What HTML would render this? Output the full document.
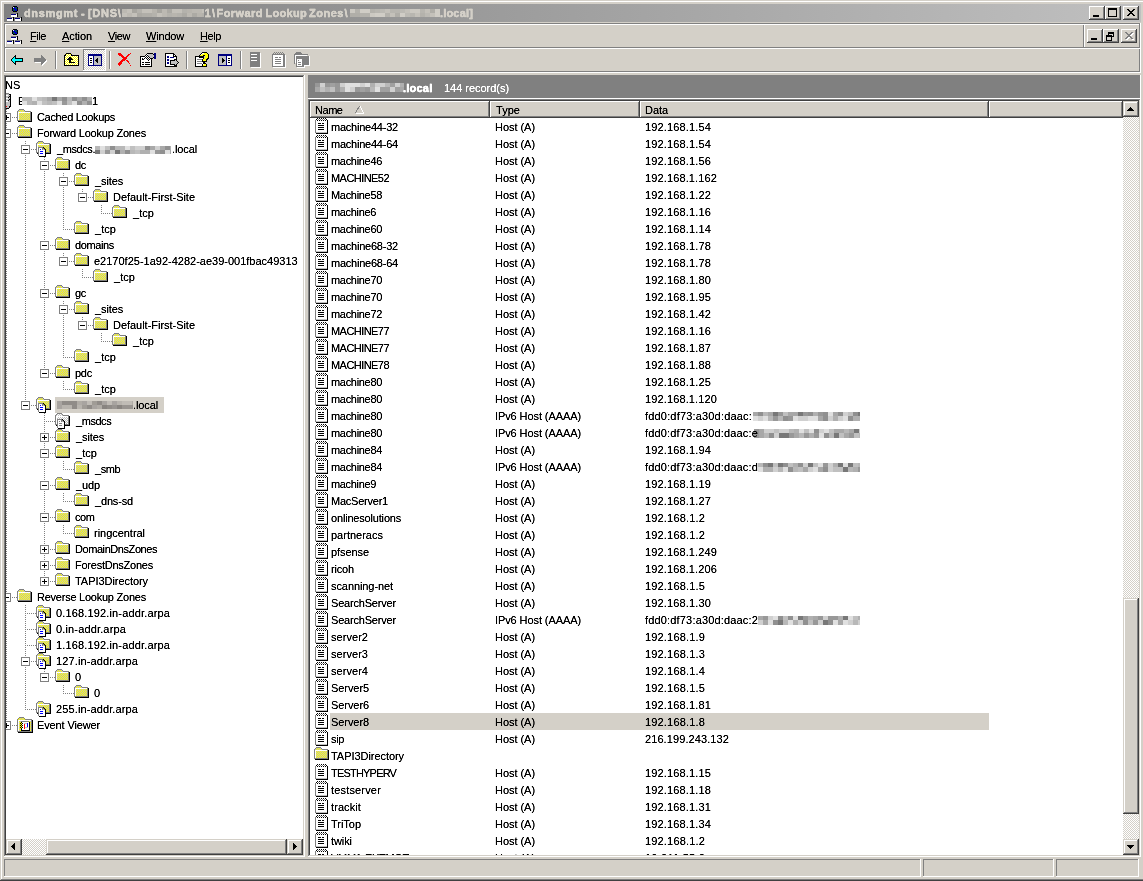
<!DOCTYPE html><html><head><meta charset="utf-8"><title>dnsmgmt</title><style>html,body{margin:0;padding:0}
body{width:1143px;height:881px;overflow:hidden;background:#d4d0c8;position:relative;font:11px/13px "Liberation Sans",sans-serif;color:#000}
div,span.t,svg.i{position:absolute}
span.t{white-space:pre}
svg.i{shape-rendering:crispEdges;overflow:hidden}
.tl{filter:url(#tf)}
u{text-decoration:underline;text-underline-offset:1px}
#clipL{left:6px;top:77px;width:297px;height:762px;overflow:hidden}
#clipR{left:310px;top:118px;width:813px;height:737px;overflow:hidden}
</style></head><body><svg width="0" height="0" style="position:absolute"><defs>
<filter id="tf" x="0" y="0" width="100%" height="100%" color-interpolation-filters="sRGB"><feComponentTransfer><feFuncA type="linear" slope="1.45" intercept="-0.03"/></feComponentTransfer></filter>
<pattern id="dyw" width="2" height="2" patternUnits="userSpaceOnUse"><rect width="2" height="2" fill="#fff"/><rect width="1" height="1" fill="#ff0"/><rect x="1" y="1" width="1" height="1" fill="#ff0"/></pattern>
<pattern id="dfw" width="2" height="2" patternUnits="userSpaceOnUse"><rect width="2" height="2" fill="#d4d0c8"/><rect width="1" height="1" fill="#fff"/><rect x="1" y="1" width="1" height="1" fill="#fff"/></pattern>
<pattern id="dgf" width="2" height="2" patternUnits="userSpaceOnUse"><rect width="2" height="2" fill="#d4d0c8"/><rect width="1" height="1" fill="#808080"/><rect x="1" y="1" width="1" height="1" fill="#808080"/></pattern>
</defs></svg><svg width="0" height="0" style="position:absolute"><defs><symbol id="fo" viewBox="0 0 16 16"><rect x="2" y="0" width="5" height="1" fill="#808080"/><rect x="1" y="1" width="1" height="1" fill="#808080"/><rect x="2" y="1" width="1" height="1" fill="#c0c0c0"/><rect x="3" y="1" width="1" height="1" fill="#ffff00"/><rect x="4" y="1" width="1" height="1" fill="#c0c0c0"/><rect x="5" y="1" width="1" height="1" fill="#ffff00"/><rect x="6" y="1" width="1" height="1" fill="#c0c0c0"/><rect x="7" y="1" width="1" height="1" fill="#808080"/><rect x="0" y="2" width="1" height="1" fill="#808080"/><rect x="1" y="2" width="1" height="1" fill="#c0c0c0"/><rect x="2" y="2" width="1" height="1" fill="#ffff00"/><rect x="3" y="2" width="1" height="1" fill="#c0c0c0"/><rect x="4" y="2" width="1" height="1" fill="#ffff00"/><rect x="5" y="2" width="1" height="1" fill="#c0c0c0"/><rect x="6" y="2" width="1" height="1" fill="#ffff00"/><rect x="7" y="2" width="1" height="1" fill="#c0c0c0"/><rect x="8" y="2" width="6" height="1" fill="#808080"/><rect x="0" y="3" width="1" height="1" fill="#808080"/><rect x="1" y="3" width="12" height="1" fill="#ffffff"/><rect x="13" y="3" width="1" height="1" fill="#808080"/><rect x="14" y="3" width="1" height="1" fill="#000000"/><rect x="0" y="4" width="1" height="1" fill="#808080"/><rect x="1" y="4" width="1" height="1" fill="#ffffff"/><rect x="2" y="4" width="1" height="1" fill="#ffff00"/><rect x="3" y="4" width="1" height="1" fill="#c0c0c0"/><rect x="4" y="4" width="1" height="1" fill="#ffff00"/><rect x="5" y="4" width="1" height="1" fill="#c0c0c0"/><rect x="6" y="4" width="1" height="1" fill="#ffff00"/><rect x="7" y="4" width="1" height="1" fill="#c0c0c0"/><rect x="8" y="4" width="1" height="1" fill="#ffff00"/><rect x="9" y="4" width="1" height="1" fill="#c0c0c0"/><rect x="10" y="4" width="1" height="1" fill="#ffff00"/><rect x="11" y="4" width="1" height="1" fill="#c0c0c0"/><rect x="12" y="4" width="1" height="1" fill="#ffff00"/><rect x="13" y="4" width="1" height="1" fill="#808080"/><rect x="14" y="4" width="1" height="1" fill="#000000"/><rect x="0" y="5" width="1" height="1" fill="#808080"/><rect x="1" y="5" width="1" height="1" fill="#ffffff"/><rect x="2" y="5" width="1" height="1" fill="#c0c0c0"/><rect x="3" y="5" width="1" height="1" fill="#ffff00"/><rect x="4" y="5" width="1" height="1" fill="#c0c0c0"/><rect x="5" y="5" width="1" height="1" fill="#ffff00"/><rect x="6" y="5" width="1" height="1" fill="#c0c0c0"/><rect x="7" y="5" width="1" height="1" fill="#ffff00"/><rect x="8" y="5" width="1" height="1" fill="#c0c0c0"/><rect x="9" y="5" width="1" height="1" fill="#ffff00"/><rect x="10" y="5" width="1" height="1" fill="#c0c0c0"/><rect x="11" y="5" width="1" height="1" fill="#ffff00"/><rect x="12" y="5" width="1" height="1" fill="#c0c0c0"/><rect x="13" y="5" width="1" height="1" fill="#808080"/><rect x="14" y="5" width="1" height="1" fill="#000000"/><rect x="0" y="6" width="1" height="1" fill="#808080"/><rect x="1" y="6" width="1" height="1" fill="#ffffff"/><rect x="2" y="6" width="1" height="1" fill="#ffff00"/><rect x="3" y="6" width="1" height="1" fill="#c0c0c0"/><rect x="4" y="6" width="1" height="1" fill="#ffff00"/><rect x="5" y="6" width="1" height="1" fill="#c0c0c0"/><rect x="6" y="6" width="1" height="1" fill="#ffff00"/><rect x="7" y="6" width="1" height="1" fill="#c0c0c0"/><rect x="8" y="6" width="1" height="1" fill="#ffff00"/><rect x="9" y="6" width="1" height="1" fill="#c0c0c0"/><rect x="10" y="6" width="1" height="1" fill="#ffff00"/><rect x="11" y="6" width="1" height="1" fill="#c0c0c0"/><rect x="12" y="6" width="1" height="1" fill="#ffff00"/><rect x="13" y="6" width="1" height="1" fill="#808080"/><rect x="14" y="6" width="1" height="1" fill="#000000"/><rect x="0" y="7" width="1" height="1" fill="#808080"/><rect x="1" y="7" width="1" height="1" fill="#ffffff"/><rect x="2" y="7" width="1" height="1" fill="#c0c0c0"/><rect x="3" y="7" width="1" height="1" fill="#ffff00"/><rect x="4" y="7" width="1" height="1" fill="#c0c0c0"/><rect x="5" y="7" width="1" height="1" fill="#ffff00"/><rect x="6" y="7" width="1" height="1" fill="#c0c0c0"/><rect x="7" y="7" width="1" height="1" fill="#ffff00"/><rect x="8" y="7" width="1" height="1" fill="#c0c0c0"/><rect x="9" y="7" width="1" height="1" fill="#ffff00"/><rect x="10" y="7" width="1" height="1" fill="#c0c0c0"/><rect x="11" y="7" width="1" height="1" fill="#ffff00"/><rect x="12" y="7" width="1" height="1" fill="#c0c0c0"/><rect x="13" y="7" width="1" height="1" fill="#808080"/><rect x="14" y="7" width="1" height="1" fill="#000000"/><rect x="0" y="8" width="1" height="1" fill="#808080"/><rect x="1" y="8" width="1" height="1" fill="#ffffff"/><rect x="2" y="8" width="1" height="1" fill="#ffff00"/><rect x="3" y="8" width="1" height="1" fill="#c0c0c0"/><rect x="4" y="8" width="1" height="1" fill="#ffff00"/><rect x="5" y="8" width="1" height="1" fill="#c0c0c0"/><rect x="6" y="8" width="1" height="1" fill="#ffff00"/><rect x="7" y="8" width="1" height="1" fill="#c0c0c0"/><rect x="8" y="8" width="1" height="1" fill="#ffff00"/><rect x="9" y="8" width="1" height="1" fill="#c0c0c0"/><rect x="10" y="8" width="1" height="1" fill="#ffff00"/><rect x="11" y="8" width="1" height="1" fill="#c0c0c0"/><rect x="12" y="8" width="1" height="1" fill="#ffff00"/><rect x="13" y="8" width="1" height="1" fill="#808080"/><rect x="14" y="8" width="1" height="1" fill="#000000"/><rect x="0" y="9" width="1" height="1" fill="#808080"/><rect x="1" y="9" width="1" height="1" fill="#ffffff"/><rect x="2" y="9" width="1" height="1" fill="#c0c0c0"/><rect x="3" y="9" width="1" height="1" fill="#ffff00"/><rect x="4" y="9" width="1" height="1" fill="#c0c0c0"/><rect x="5" y="9" width="1" height="1" fill="#ffff00"/><rect x="6" y="9" width="1" height="1" fill="#c0c0c0"/><rect x="7" y="9" width="1" height="1" fill="#ffff00"/><rect x="8" y="9" width="1" height="1" fill="#c0c0c0"/><rect x="9" y="9" width="1" height="1" fill="#ffff00"/><rect x="10" y="9" width="1" height="1" fill="#c0c0c0"/><rect x="11" y="9" width="1" height="1" fill="#ffff00"/><rect x="12" y="9" width="1" height="1" fill="#c0c0c0"/><rect x="13" y="9" width="1" height="1" fill="#808080"/><rect x="14" y="9" width="1" height="1" fill="#000000"/><rect x="0" y="10" width="1" height="1" fill="#808080"/><rect x="1" y="10" width="1" height="1" fill="#ffffff"/><rect x="2" y="10" width="1" height="1" fill="#ffff00"/><rect x="3" y="10" width="1" height="1" fill="#c0c0c0"/><rect x="4" y="10" width="1" height="1" fill="#ffff00"/><rect x="5" y="10" width="1" height="1" fill="#c0c0c0"/><rect x="6" y="10" width="1" height="1" fill="#ffff00"/><rect x="7" y="10" width="1" height="1" fill="#c0c0c0"/><rect x="8" y="10" width="1" height="1" fill="#ffff00"/><rect x="9" y="10" width="1" height="1" fill="#c0c0c0"/><rect x="10" y="10" width="1" height="1" fill="#ffff00"/><rect x="11" y="10" width="1" height="1" fill="#c0c0c0"/><rect x="12" y="10" width="1" height="1" fill="#ffff00"/><rect x="13" y="10" width="1" height="1" fill="#808080"/><rect x="14" y="10" width="1" height="1" fill="#000000"/><rect x="0" y="11" width="14" height="1" fill="#808080"/><rect x="14" y="11" width="1" height="1" fill="#000000"/><rect x="1" y="12" width="14" height="1" fill="#000000"/></symbol><symbol id="zo" viewBox="0 0 16 16"><rect x="2" y="0" width="5" height="1" fill="#808080"/><rect x="1" y="1" width="1" height="1" fill="#808080"/><rect x="2" y="1" width="1" height="1" fill="#c0c0c0"/><rect x="3" y="1" width="1" height="1" fill="#ffff00"/><rect x="4" y="1" width="1" height="1" fill="#c0c0c0"/><rect x="5" y="1" width="1" height="1" fill="#ffff00"/><rect x="6" y="1" width="1" height="1" fill="#c0c0c0"/><rect x="7" y="1" width="1" height="1" fill="#808080"/><rect x="0" y="2" width="1" height="1" fill="#808080"/><rect x="1" y="2" width="1" height="1" fill="#c0c0c0"/><rect x="2" y="2" width="1" height="1" fill="#ffff00"/><rect x="3" y="2" width="1" height="1" fill="#c0c0c0"/><rect x="4" y="2" width="1" height="1" fill="#ffff00"/><rect x="5" y="2" width="1" height="1" fill="#c0c0c0"/><rect x="6" y="2" width="1" height="1" fill="#ffff00"/><rect x="7" y="2" width="1" height="1" fill="#c0c0c0"/><rect x="8" y="2" width="6" height="1" fill="#808080"/><rect x="0" y="3" width="1" height="1" fill="#808080"/><rect x="1" y="3" width="12" height="1" fill="#ffffff"/><rect x="13" y="3" width="1" height="1" fill="#808080"/><rect x="14" y="3" width="1" height="1" fill="#000000"/><rect x="0" y="4" width="1" height="1" fill="#808080"/><rect x="1" y="4" width="1" height="1" fill="#ffffff"/><rect x="2" y="4" width="1" height="1" fill="#ffff00"/><rect x="3" y="4" width="1" height="1" fill="#c0c0c0"/><rect x="4" y="4" width="1" height="1" fill="#ffff00"/><rect x="5" y="4" width="1" height="1" fill="#c0c0c0"/><rect x="6" y="4" width="1" height="1" fill="#ffff00"/><rect x="7" y="4" width="1" height="1" fill="#c0c0c0"/><rect x="8" y="4" width="1" height="1" fill="#ffff00"/><rect x="9" y="4" width="1" height="1" fill="#c0c0c0"/><rect x="10" y="4" width="1" height="1" fill="#ffff00"/><rect x="11" y="4" width="1" height="1" fill="#c0c0c0"/><rect x="12" y="4" width="1" height="1" fill="#ffff00"/><rect x="13" y="4" width="1" height="1" fill="#808080"/><rect x="14" y="4" width="1" height="1" fill="#000000"/><rect x="0" y="5" width="1" height="1" fill="#808080"/><rect x="1" y="5" width="1" height="1" fill="#ffffff"/><rect x="2" y="5" width="1" height="1" fill="#c0c0c0"/><rect x="3" y="5" width="1" height="1" fill="#ffff00"/><rect x="4" y="5" width="1" height="1" fill="#c0c0c0"/><rect x="5" y="5" width="1" height="1" fill="#ffff00"/><rect x="6" y="5" width="1" height="1" fill="#c0c0c0"/><rect x="7" y="5" width="1" height="1" fill="#ffff00"/><rect x="8" y="5" width="1" height="1" fill="#c0c0c0"/><rect x="9" y="5" width="1" height="1" fill="#ffff00"/><rect x="10" y="5" width="1" height="1" fill="#c0c0c0"/><rect x="11" y="5" width="1" height="1" fill="#ffff00"/><rect x="12" y="5" width="1" height="1" fill="#c0c0c0"/><rect x="13" y="5" width="1" height="1" fill="#808080"/><rect x="14" y="5" width="1" height="1" fill="#000000"/><rect x="0" y="6" width="1" height="1" fill="#808080"/><rect x="1" y="6" width="1" height="1" fill="#ffffff"/><rect x="2" y="6" width="1" height="1" fill="#ffff00"/><rect x="3" y="6" width="1" height="1" fill="#c0c0c0"/><rect x="4" y="6" width="1" height="1" fill="#ffff00"/><rect x="5" y="6" width="1" height="1" fill="#c0c0c0"/><rect x="6" y="6" width="1" height="1" fill="#ffff00"/><rect x="7" y="6" width="1" height="1" fill="#c0c0c0"/><rect x="8" y="6" width="1" height="1" fill="#ffff00"/><rect x="9" y="6" width="1" height="1" fill="#c0c0c0"/><rect x="10" y="6" width="1" height="1" fill="#ffff00"/><rect x="11" y="6" width="1" height="1" fill="#c0c0c0"/><rect x="12" y="6" width="1" height="1" fill="#ffff00"/><rect x="13" y="6" width="1" height="1" fill="#808080"/><rect x="14" y="6" width="1" height="1" fill="#000000"/><rect x="0" y="7" width="1" height="1" fill="#808080"/><rect x="1" y="7" width="1" height="1" fill="#ffffff"/><rect x="2" y="7" width="1" height="1" fill="#c0c0c0"/><rect x="3" y="7" width="1" height="1" fill="#ffff00"/><rect x="4" y="7" width="1" height="1" fill="#c0c0c0"/><rect x="5" y="7" width="1" height="1" fill="#ffff00"/><rect x="6" y="7" width="1" height="1" fill="#c0c0c0"/><rect x="7" y="7" width="1" height="1" fill="#ffff00"/><rect x="8" y="7" width="1" height="1" fill="#c0c0c0"/><rect x="9" y="7" width="1" height="1" fill="#ffff00"/><rect x="10" y="7" width="1" height="1" fill="#c0c0c0"/><rect x="11" y="7" width="1" height="1" fill="#ffff00"/><rect x="12" y="7" width="1" height="1" fill="#c0c0c0"/><rect x="13" y="7" width="1" height="1" fill="#808080"/><rect x="14" y="7" width="1" height="1" fill="#000000"/><rect x="0" y="8" width="1" height="1" fill="#808080"/><rect x="1" y="8" width="1" height="1" fill="#ffffff"/><rect x="2" y="8" width="1" height="1" fill="#ffff00"/><rect x="3" y="8" width="1" height="1" fill="#c0c0c0"/><rect x="4" y="8" width="1" height="1" fill="#ffff00"/><rect x="5" y="8" width="1" height="1" fill="#c0c0c0"/><rect x="6" y="8" width="1" height="1" fill="#ffff00"/><rect x="7" y="8" width="1" height="1" fill="#c0c0c0"/><rect x="8" y="8" width="1" height="1" fill="#ffff00"/><rect x="9" y="8" width="1" height="1" fill="#c0c0c0"/><rect x="10" y="8" width="1" height="1" fill="#ffff00"/><rect x="11" y="8" width="1" height="1" fill="#c0c0c0"/><rect x="12" y="8" width="1" height="1" fill="#ffff00"/><rect x="13" y="8" width="1" height="1" fill="#808080"/><rect x="14" y="8" width="1" height="1" fill="#000000"/><rect x="0" y="9" width="1" height="1" fill="#808080"/><rect x="1" y="9" width="1" height="1" fill="#ffffff"/><rect x="2" y="9" width="1" height="1" fill="#c0c0c0"/><rect x="3" y="9" width="1" height="1" fill="#ffff00"/><rect x="4" y="9" width="1" height="1" fill="#c0c0c0"/><rect x="5" y="9" width="1" height="1" fill="#ffff00"/><rect x="6" y="9" width="1" height="1" fill="#c0c0c0"/><rect x="7" y="9" width="1" height="1" fill="#ffff00"/><rect x="8" y="9" width="1" height="1" fill="#c0c0c0"/><rect x="9" y="9" width="1" height="1" fill="#ffff00"/><rect x="10" y="9" width="1" height="1" fill="#c0c0c0"/><rect x="11" y="9" width="1" height="1" fill="#ffff00"/><rect x="12" y="9" width="1" height="1" fill="#c0c0c0"/><rect x="13" y="9" width="1" height="1" fill="#808080"/><rect x="14" y="9" width="1" height="1" fill="#000000"/><rect x="0" y="10" width="1" height="1" fill="#808080"/><rect x="1" y="10" width="1" height="1" fill="#ffffff"/><rect x="2" y="10" width="1" height="1" fill="#ffff00"/><rect x="3" y="10" width="1" height="1" fill="#c0c0c0"/><rect x="4" y="10" width="1" height="1" fill="#ffff00"/><rect x="5" y="10" width="1" height="1" fill="#c0c0c0"/><rect x="6" y="10" width="1" height="1" fill="#ffff00"/><rect x="7" y="10" width="1" height="1" fill="#c0c0c0"/><rect x="8" y="10" width="1" height="1" fill="#ffff00"/><rect x="9" y="10" width="1" height="1" fill="#c0c0c0"/><rect x="10" y="10" width="1" height="1" fill="#ffff00"/><rect x="11" y="10" width="1" height="1" fill="#c0c0c0"/><rect x="12" y="10" width="1" height="1" fill="#ffff00"/><rect x="13" y="10" width="1" height="1" fill="#808080"/><rect x="14" y="10" width="1" height="1" fill="#000000"/><rect x="0" y="11" width="14" height="1" fill="#808080"/><rect x="14" y="11" width="1" height="1" fill="#000000"/><rect x="1" y="12" width="14" height="1" fill="#000000"/><rect x="1" y="12" width="1" height="1" fill="#000"/><rect x="2" y="6" width="5" height="1" fill="#808080"/><rect x="7" y="6" width="1" height="1" fill="#000000"/><rect x="2" y="7" width="1" height="1" fill="#808080"/><rect x="3" y="7" width="3" height="1" fill="#ffffff"/><rect x="6" y="7" width="2" height="1" fill="#808080"/><rect x="8" y="7" width="1" height="1" fill="#000000"/><rect x="2" y="8" width="1" height="1" fill="#808080"/><rect x="3" y="8" width="1" height="1" fill="#ffffff"/><rect x="4" y="8" width="1" height="1" fill="#0000ff"/><rect x="5" y="8" width="1" height="1" fill="#ffffff"/><rect x="6" y="8" width="1" height="1" fill="#808080"/><rect x="7" y="8" width="1" height="1" fill="#c0c0c0"/><rect x="8" y="8" width="1" height="1" fill="#808080"/><rect x="9" y="8" width="1" height="1" fill="#000000"/><rect x="2" y="9" width="1" height="1" fill="#808080"/><rect x="3" y="9" width="6" height="1" fill="#ffffff"/><rect x="9" y="9" width="1" height="1" fill="#000000"/><rect x="2" y="10" width="1" height="1" fill="#808080"/><rect x="3" y="10" width="1" height="1" fill="#ffffff"/><rect x="4" y="10" width="3" height="1" fill="#0000ff"/><rect x="7" y="10" width="2" height="1" fill="#ffffff"/><rect x="9" y="10" width="1" height="1" fill="#000000"/><rect x="2" y="11" width="1" height="1" fill="#808080"/><rect x="3" y="11" width="6" height="1" fill="#ffffff"/><rect x="9" y="11" width="1" height="1" fill="#000000"/><rect x="2" y="12" width="1" height="1" fill="#808080"/><rect x="3" y="12" width="1" height="1" fill="#ffffff"/><rect x="4" y="12" width="3" height="1" fill="#0000ff"/><rect x="7" y="12" width="2" height="1" fill="#ffffff"/><rect x="9" y="12" width="1" height="1" fill="#000000"/><rect x="2" y="13" width="1" height="1" fill="#808080"/><rect x="3" y="13" width="6" height="1" fill="#ffffff"/><rect x="9" y="13" width="1" height="1" fill="#000000"/><rect x="2" y="14" width="1" height="1" fill="#808080"/><rect x="3" y="14" width="6" height="1" fill="#ffffff"/><rect x="9" y="14" width="1" height="1" fill="#000000"/><rect x="3" y="15" width="7" height="1" fill="#000000"/></symbol><symbol id="de" viewBox="0 0 16 16"><rect x="2" y="0" width="5" height="1" fill="#808080"/><rect x="1" y="1" width="1" height="1" fill="#808080"/><rect x="2" y="1" width="1" height="1" fill="#c0c0c0"/><rect x="3" y="1" width="1" height="1" fill="#ffffff"/><rect x="4" y="1" width="1" height="1" fill="#c0c0c0"/><rect x="5" y="1" width="1" height="1" fill="#ffffff"/><rect x="6" y="1" width="1" height="1" fill="#c0c0c0"/><rect x="7" y="1" width="1" height="1" fill="#808080"/><rect x="0" y="2" width="1" height="1" fill="#808080"/><rect x="1" y="2" width="1" height="1" fill="#c0c0c0"/><rect x="2" y="2" width="1" height="1" fill="#ffffff"/><rect x="3" y="2" width="1" height="1" fill="#c0c0c0"/><rect x="4" y="2" width="1" height="1" fill="#ffffff"/><rect x="5" y="2" width="1" height="1" fill="#c0c0c0"/><rect x="6" y="2" width="1" height="1" fill="#ffffff"/><rect x="7" y="2" width="1" height="1" fill="#c0c0c0"/><rect x="8" y="2" width="6" height="1" fill="#808080"/><rect x="0" y="3" width="1" height="1" fill="#808080"/><rect x="1" y="3" width="12" height="1" fill="#ffffff"/><rect x="13" y="3" width="1" height="1" fill="#808080"/><rect x="14" y="3" width="1" height="1" fill="#000000"/><rect x="0" y="4" width="1" height="1" fill="#808080"/><rect x="1" y="4" width="1" height="1" fill="#ffffff"/><rect x="2" y="4" width="1" height="1" fill="#ffffff"/><rect x="3" y="4" width="1" height="1" fill="#c0c0c0"/><rect x="4" y="4" width="1" height="1" fill="#ffffff"/><rect x="5" y="4" width="1" height="1" fill="#c0c0c0"/><rect x="6" y="4" width="1" height="1" fill="#ffffff"/><rect x="7" y="4" width="1" height="1" fill="#c0c0c0"/><rect x="8" y="4" width="1" height="1" fill="#ffffff"/><rect x="9" y="4" width="1" height="1" fill="#c0c0c0"/><rect x="10" y="4" width="1" height="1" fill="#ffffff"/><rect x="11" y="4" width="1" height="1" fill="#c0c0c0"/><rect x="12" y="4" width="1" height="1" fill="#ffffff"/><rect x="13" y="4" width="1" height="1" fill="#808080"/><rect x="14" y="4" width="1" height="1" fill="#000000"/><rect x="0" y="5" width="1" height="1" fill="#808080"/><rect x="1" y="5" width="1" height="1" fill="#ffffff"/><rect x="2" y="5" width="1" height="1" fill="#c0c0c0"/><rect x="3" y="5" width="1" height="1" fill="#ffffff"/><rect x="4" y="5" width="1" height="1" fill="#c0c0c0"/><rect x="5" y="5" width="1" height="1" fill="#ffffff"/><rect x="6" y="5" width="1" height="1" fill="#c0c0c0"/><rect x="7" y="5" width="1" height="1" fill="#ffffff"/><rect x="8" y="5" width="1" height="1" fill="#c0c0c0"/><rect x="9" y="5" width="1" height="1" fill="#ffffff"/><rect x="10" y="5" width="1" height="1" fill="#c0c0c0"/><rect x="11" y="5" width="1" height="1" fill="#ffffff"/><rect x="12" y="5" width="1" height="1" fill="#c0c0c0"/><rect x="13" y="5" width="1" height="1" fill="#808080"/><rect x="14" y="5" width="1" height="1" fill="#000000"/><rect x="0" y="6" width="1" height="1" fill="#808080"/><rect x="1" y="6" width="1" height="1" fill="#ffffff"/><rect x="2" y="6" width="1" height="1" fill="#ffffff"/><rect x="3" y="6" width="1" height="1" fill="#c0c0c0"/><rect x="4" y="6" width="1" height="1" fill="#ffffff"/><rect x="5" y="6" width="1" height="1" fill="#c0c0c0"/><rect x="6" y="6" width="1" height="1" fill="#ffffff"/><rect x="7" y="6" width="1" height="1" fill="#c0c0c0"/><rect x="8" y="6" width="1" height="1" fill="#ffffff"/><rect x="9" y="6" width="1" height="1" fill="#c0c0c0"/><rect x="10" y="6" width="1" height="1" fill="#ffffff"/><rect x="11" y="6" width="1" height="1" fill="#c0c0c0"/><rect x="12" y="6" width="1" height="1" fill="#ffffff"/><rect x="13" y="6" width="1" height="1" fill="#808080"/><rect x="14" y="6" width="1" height="1" fill="#000000"/><rect x="0" y="7" width="1" height="1" fill="#808080"/><rect x="1" y="7" width="1" height="1" fill="#ffffff"/><rect x="2" y="7" width="1" height="1" fill="#c0c0c0"/><rect x="3" y="7" width="1" height="1" fill="#ffffff"/><rect x="4" y="7" width="1" height="1" fill="#c0c0c0"/><rect x="5" y="7" width="1" height="1" fill="#ffffff"/><rect x="6" y="7" width="1" height="1" fill="#c0c0c0"/><rect x="7" y="7" width="1" height="1" fill="#ffffff"/><rect x="8" y="7" width="1" height="1" fill="#c0c0c0"/><rect x="9" y="7" width="1" height="1" fill="#ffffff"/><rect x="10" y="7" width="1" height="1" fill="#c0c0c0"/><rect x="11" y="7" width="1" height="1" fill="#ffffff"/><rect x="12" y="7" width="1" height="1" fill="#c0c0c0"/><rect x="13" y="7" width="1" height="1" fill="#808080"/><rect x="14" y="7" width="1" height="1" fill="#000000"/><rect x="0" y="8" width="1" height="1" fill="#808080"/><rect x="1" y="8" width="1" height="1" fill="#ffffff"/><rect x="2" y="8" width="1" height="1" fill="#ffffff"/><rect x="3" y="8" width="1" height="1" fill="#c0c0c0"/><rect x="4" y="8" width="1" height="1" fill="#ffffff"/><rect x="5" y="8" width="1" height="1" fill="#c0c0c0"/><rect x="6" y="8" width="1" height="1" fill="#ffffff"/><rect x="7" y="8" width="1" height="1" fill="#c0c0c0"/><rect x="8" y="8" width="1" height="1" fill="#ffffff"/><rect x="9" y="8" width="1" height="1" fill="#c0c0c0"/><rect x="10" y="8" width="1" height="1" fill="#ffffff"/><rect x="11" y="8" width="1" height="1" fill="#c0c0c0"/><rect x="12" y="8" width="1" height="1" fill="#ffffff"/><rect x="13" y="8" width="1" height="1" fill="#808080"/><rect x="14" y="8" width="1" height="1" fill="#000000"/><rect x="0" y="9" width="1" height="1" fill="#808080"/><rect x="1" y="9" width="1" height="1" fill="#ffffff"/><rect x="2" y="9" width="1" height="1" fill="#c0c0c0"/><rect x="3" y="9" width="1" height="1" fill="#ffffff"/><rect x="4" y="9" width="1" height="1" fill="#c0c0c0"/><rect x="5" y="9" width="1" height="1" fill="#ffffff"/><rect x="6" y="9" width="1" height="1" fill="#c0c0c0"/><rect x="7" y="9" width="1" height="1" fill="#ffffff"/><rect x="8" y="9" width="1" height="1" fill="#c0c0c0"/><rect x="9" y="9" width="1" height="1" fill="#ffffff"/><rect x="10" y="9" width="1" height="1" fill="#c0c0c0"/><rect x="11" y="9" width="1" height="1" fill="#ffffff"/><rect x="12" y="9" width="1" height="1" fill="#c0c0c0"/><rect x="13" y="9" width="1" height="1" fill="#808080"/><rect x="14" y="9" width="1" height="1" fill="#000000"/><rect x="0" y="10" width="1" height="1" fill="#808080"/><rect x="1" y="10" width="1" height="1" fill="#ffffff"/><rect x="2" y="10" width="1" height="1" fill="#ffffff"/><rect x="3" y="10" width="1" height="1" fill="#c0c0c0"/><rect x="4" y="10" width="1" height="1" fill="#ffffff"/><rect x="5" y="10" width="1" height="1" fill="#c0c0c0"/><rect x="6" y="10" width="1" height="1" fill="#ffffff"/><rect x="7" y="10" width="1" height="1" fill="#c0c0c0"/><rect x="8" y="10" width="1" height="1" fill="#ffffff"/><rect x="9" y="10" width="1" height="1" fill="#c0c0c0"/><rect x="10" y="10" width="1" height="1" fill="#ffffff"/><rect x="11" y="10" width="1" height="1" fill="#c0c0c0"/><rect x="12" y="10" width="1" height="1" fill="#ffffff"/><rect x="13" y="10" width="1" height="1" fill="#808080"/><rect x="14" y="10" width="1" height="1" fill="#000000"/><rect x="0" y="11" width="14" height="1" fill="#808080"/><rect x="14" y="11" width="1" height="1" fill="#000000"/><rect x="1" y="12" width="14" height="1" fill="#000000"/><rect x="1" y="12" width="1" height="1" fill="#000"/><rect x="2" y="6" width="5" height="1" fill="#808080"/><rect x="7" y="6" width="1" height="1" fill="#000000"/><rect x="2" y="7" width="1" height="1" fill="#808080"/><rect x="3" y="7" width="3" height="1" fill="#ffffff"/><rect x="6" y="7" width="2" height="1" fill="#808080"/><rect x="8" y="7" width="1" height="1" fill="#000000"/><rect x="2" y="8" width="1" height="1" fill="#808080"/><rect x="3" y="8" width="1" height="1" fill="#ffffff"/><rect x="4" y="8" width="1" height="1" fill="#808080"/><rect x="5" y="8" width="1" height="1" fill="#ffffff"/><rect x="6" y="8" width="1" height="1" fill="#808080"/><rect x="7" y="8" width="1" height="1" fill="#c0c0c0"/><rect x="8" y="8" width="1" height="1" fill="#808080"/><rect x="9" y="8" width="1" height="1" fill="#000000"/><rect x="2" y="9" width="1" height="1" fill="#808080"/><rect x="3" y="9" width="6" height="1" fill="#ffffff"/><rect x="9" y="9" width="1" height="1" fill="#000000"/><rect x="2" y="10" width="1" height="1" fill="#808080"/><rect x="3" y="10" width="1" height="1" fill="#ffffff"/><rect x="4" y="10" width="3" height="1" fill="#808080"/><rect x="7" y="10" width="2" height="1" fill="#ffffff"/><rect x="9" y="10" width="1" height="1" fill="#000000"/><rect x="2" y="11" width="1" height="1" fill="#808080"/><rect x="3" y="11" width="6" height="1" fill="#ffffff"/><rect x="9" y="11" width="1" height="1" fill="#000000"/><rect x="2" y="12" width="1" height="1" fill="#808080"/><rect x="3" y="12" width="1" height="1" fill="#ffffff"/><rect x="4" y="12" width="3" height="1" fill="#808080"/><rect x="7" y="12" width="2" height="1" fill="#ffffff"/><rect x="9" y="12" width="1" height="1" fill="#000000"/><rect x="2" y="13" width="1" height="1" fill="#808080"/><rect x="3" y="13" width="6" height="1" fill="#ffffff"/><rect x="9" y="13" width="1" height="1" fill="#000000"/><rect x="2" y="14" width="1" height="1" fill="#808080"/><rect x="3" y="14" width="6" height="1" fill="#ffffff"/><rect x="9" y="14" width="1" height="1" fill="#000000"/><rect x="3" y="15" width="7" height="1" fill="#000000"/></symbol><symbol id="re" viewBox="0 0 16 16"><rect x="3" y="0" width="1" height="1" fill="#000000"/><rect x="5" y="0" width="1" height="1" fill="#000000"/><rect x="7" y="0" width="1" height="1" fill="#000000"/><rect x="9" y="0" width="1" height="1" fill="#000000"/><rect x="11" y="0" width="1" height="1" fill="#000000"/><rect x="2" y="1" width="1" height="1" fill="#000000"/><rect x="3" y="1" width="1" height="1" fill="#ffffff"/><rect x="4" y="1" width="1" height="1" fill="#808080"/><rect x="5" y="1" width="1" height="1" fill="#ffffff"/><rect x="6" y="1" width="1" height="1" fill="#808080"/><rect x="7" y="1" width="1" height="1" fill="#ffffff"/><rect x="8" y="1" width="1" height="1" fill="#808080"/><rect x="9" y="1" width="1" height="1" fill="#ffffff"/><rect x="10" y="1" width="1" height="1" fill="#808080"/><rect x="11" y="1" width="1" height="1" fill="#ffffff"/><rect x="12" y="1" width="1" height="1" fill="#000000"/><rect x="1" y="2" width="1" height="1" fill="#808080"/><rect x="2" y="2" width="1" height="1" fill="#ffffff"/><rect x="3" y="2" width="1" height="1" fill="#000000"/><rect x="4" y="2" width="1" height="1" fill="#ffffff"/><rect x="5" y="2" width="1" height="1" fill="#000000"/><rect x="6" y="2" width="1" height="1" fill="#ffffff"/><rect x="7" y="2" width="1" height="1" fill="#000000"/><rect x="8" y="2" width="1" height="1" fill="#ffffff"/><rect x="9" y="2" width="1" height="1" fill="#000000"/><rect x="10" y="2" width="1" height="1" fill="#ffffff"/><rect x="11" y="2" width="1" height="1" fill="#000000"/><rect x="12" y="2" width="1" height="1" fill="#ffffff"/><rect x="13" y="2" width="1" height="1" fill="#000000"/><rect x="1" y="3" width="1" height="1" fill="#808080"/><rect x="2" y="3" width="11" height="1" fill="#ffffff"/><rect x="13" y="3" width="1" height="1" fill="#000000"/><rect x="1" y="4" width="1" height="1" fill="#808080"/><rect x="2" y="4" width="11" height="1" fill="#ffffff"/><rect x="13" y="4" width="1" height="1" fill="#000000"/><rect x="1" y="5" width="1" height="1" fill="#808080"/><rect x="2" y="5" width="2" height="1" fill="#ffffff"/><rect x="4" y="5" width="3" height="1" fill="#000000"/><rect x="7" y="5" width="1" height="1" fill="#ffffff"/><rect x="8" y="5" width="2" height="1" fill="#000000"/><rect x="10" y="5" width="3" height="1" fill="#ffffff"/><rect x="13" y="5" width="1" height="1" fill="#000000"/><rect x="1" y="6" width="1" height="1" fill="#808080"/><rect x="2" y="6" width="11" height="1" fill="#ffffff"/><rect x="13" y="6" width="1" height="1" fill="#000000"/><rect x="1" y="7" width="1" height="1" fill="#808080"/><rect x="2" y="7" width="2" height="1" fill="#ffffff"/><rect x="4" y="7" width="6" height="1" fill="#000000"/><rect x="10" y="7" width="3" height="1" fill="#ffffff"/><rect x="13" y="7" width="1" height="1" fill="#000000"/><rect x="1" y="8" width="1" height="1" fill="#808080"/><rect x="2" y="8" width="11" height="1" fill="#ffffff"/><rect x="13" y="8" width="1" height="1" fill="#000000"/><rect x="1" y="9" width="1" height="1" fill="#808080"/><rect x="2" y="9" width="2" height="1" fill="#ffffff"/><rect x="4" y="9" width="6" height="1" fill="#000000"/><rect x="10" y="9" width="3" height="1" fill="#ffffff"/><rect x="13" y="9" width="1" height="1" fill="#000000"/><rect x="1" y="10" width="1" height="1" fill="#808080"/><rect x="2" y="10" width="11" height="1" fill="#ffffff"/><rect x="13" y="10" width="1" height="1" fill="#000000"/><rect x="1" y="11" width="1" height="1" fill="#808080"/><rect x="2" y="11" width="2" height="1" fill="#ffffff"/><rect x="4" y="11" width="6" height="1" fill="#000000"/><rect x="10" y="11" width="3" height="1" fill="#ffffff"/><rect x="13" y="11" width="1" height="1" fill="#000000"/><rect x="1" y="12" width="1" height="1" fill="#808080"/><rect x="2" y="12" width="11" height="1" fill="#ffffff"/><rect x="13" y="12" width="1" height="1" fill="#000000"/><rect x="1" y="13" width="1" height="1" fill="#808080"/><rect x="2" y="13" width="11" height="1" fill="#ffffff"/><rect x="13" y="13" width="1" height="1" fill="#000000"/><rect x="1" y="14" width="1" height="1" fill="#808080"/><rect x="2" y="14" width="11" height="1" fill="#c0c0c0"/><rect x="13" y="14" width="1" height="1" fill="#000000"/><rect x="2" y="15" width="12" height="1" fill="#000000"/></symbol><symbol id="ev" viewBox="0 0 16 16"><rect x="2" y="0" width="5" height="1" fill="#808080"/><rect x="1" y="1" width="1" height="1" fill="#808080"/><rect x="2" y="1" width="1" height="1" fill="#ffff00"/><rect x="3" y="1" width="1" height="1" fill="#c0c0c0"/><rect x="4" y="1" width="1" height="1" fill="#ffff00"/><rect x="5" y="1" width="1" height="1" fill="#c0c0c0"/><rect x="6" y="1" width="1" height="1" fill="#ffff00"/><rect x="7" y="1" width="1" height="1" fill="#808080"/><rect x="0" y="2" width="1" height="1" fill="#808080"/><rect x="1" y="2" width="1" height="1" fill="#ffff00"/><rect x="2" y="2" width="1" height="1" fill="#c0c0c0"/><rect x="3" y="2" width="1" height="1" fill="#ffff00"/><rect x="4" y="2" width="1" height="1" fill="#c0c0c0"/><rect x="5" y="2" width="1" height="1" fill="#ffff00"/><rect x="6" y="2" width="1" height="1" fill="#c0c0c0"/><rect x="7" y="2" width="1" height="1" fill="#ffff00"/><rect x="8" y="2" width="7" height="1" fill="#808080"/><rect x="0" y="3" width="1" height="1" fill="#808080"/><rect x="1" y="3" width="13" height="1" fill="#ffffff"/><rect x="14" y="3" width="1" height="1" fill="#808080"/><rect x="15" y="3" width="1" height="1" fill="#000000"/><rect x="0" y="4" width="1" height="1" fill="#808080"/><rect x="1" y="4" width="1" height="1" fill="#ffffff"/><rect x="2" y="4" width="1" height="1" fill="#ffff00"/><rect x="3" y="4" width="1" height="1" fill="#c0c0c0"/><rect x="4" y="4" width="8" height="1" fill="#808080"/><rect x="12" y="4" width="1" height="1" fill="#ffff00"/><rect x="13" y="4" width="1" height="1" fill="#c0c0c0"/><rect x="14" y="4" width="1" height="1" fill="#808080"/><rect x="15" y="4" width="1" height="1" fill="#000000"/><rect x="0" y="5" width="1" height="1" fill="#808080"/><rect x="1" y="5" width="1" height="1" fill="#ffffff"/><rect x="2" y="5" width="1" height="1" fill="#c0c0c0"/><rect x="3" y="5" width="1" height="1" fill="#ffff00"/><rect x="4" y="5" width="1" height="1" fill="#000000"/><rect x="5" y="5" width="7" height="1" fill="#ffffff"/><rect x="12" y="5" width="1" height="1" fill="#000000"/><rect x="13" y="5" width="1" height="1" fill="#ffff00"/><rect x="14" y="5" width="1" height="1" fill="#808080"/><rect x="15" y="5" width="1" height="1" fill="#000000"/><rect x="0" y="6" width="1" height="1" fill="#808080"/><rect x="1" y="6" width="1" height="1" fill="#ffffff"/><rect x="2" y="6" width="1" height="1" fill="#ffff00"/><rect x="3" y="6" width="1" height="1" fill="#000000"/><rect x="4" y="6" width="1" height="1" fill="#ffff00"/><rect x="5" y="6" width="1" height="1" fill="#000000"/><rect x="6" y="6" width="1" height="1" fill="#ffffff"/><rect x="7" y="6" width="3" height="1" fill="#c0c0c0"/><rect x="10" y="6" width="1" height="1" fill="#0000ff"/><rect x="11" y="6" width="1" height="1" fill="#ffffff"/><rect x="12" y="6" width="1" height="1" fill="#000000"/><rect x="13" y="6" width="1" height="1" fill="#c0c0c0"/><rect x="14" y="6" width="1" height="1" fill="#808080"/><rect x="15" y="6" width="1" height="1" fill="#000000"/><rect x="0" y="7" width="1" height="1" fill="#808080"/><rect x="1" y="7" width="1" height="1" fill="#ffffff"/><rect x="2" y="7" width="1" height="1" fill="#c0c0c0"/><rect x="3" y="7" width="1" height="1" fill="#ffff00"/><rect x="4" y="7" width="1" height="1" fill="#000000"/><rect x="5" y="7" width="2" height="1" fill="#ffffff"/><rect x="7" y="7" width="1" height="1" fill="#ff0000"/><rect x="8" y="7" width="2" height="1" fill="#ffffff"/><rect x="10" y="7" width="1" height="1" fill="#0000ff"/><rect x="11" y="7" width="1" height="1" fill="#ffffff"/><rect x="12" y="7" width="1" height="1" fill="#000000"/><rect x="13" y="7" width="1" height="1" fill="#ffff00"/><rect x="14" y="7" width="1" height="1" fill="#808080"/><rect x="15" y="7" width="1" height="1" fill="#000000"/><rect x="0" y="8" width="1" height="1" fill="#808080"/><rect x="1" y="8" width="1" height="1" fill="#ffffff"/><rect x="2" y="8" width="1" height="1" fill="#ffff00"/><rect x="3" y="8" width="1" height="1" fill="#000000"/><rect x="4" y="8" width="1" height="1" fill="#ffff00"/><rect x="5" y="8" width="1" height="1" fill="#000000"/><rect x="6" y="8" width="1" height="1" fill="#ffffff"/><rect x="7" y="8" width="1" height="1" fill="#ff0000"/><rect x="8" y="8" width="2" height="1" fill="#ffffff"/><rect x="10" y="8" width="1" height="1" fill="#0000ff"/><rect x="11" y="8" width="1" height="1" fill="#ffffff"/><rect x="12" y="8" width="1" height="1" fill="#000000"/><rect x="13" y="8" width="1" height="1" fill="#c0c0c0"/><rect x="14" y="8" width="1" height="1" fill="#808080"/><rect x="15" y="8" width="1" height="1" fill="#000000"/><rect x="0" y="9" width="1" height="1" fill="#808080"/><rect x="1" y="9" width="1" height="1" fill="#ffffff"/><rect x="2" y="9" width="1" height="1" fill="#c0c0c0"/><rect x="3" y="9" width="1" height="1" fill="#ffff00"/><rect x="4" y="9" width="1" height="1" fill="#000000"/><rect x="5" y="9" width="2" height="1" fill="#ffffff"/><rect x="7" y="9" width="1" height="1" fill="#ff0000"/><rect x="8" y="9" width="2" height="1" fill="#ffffff"/><rect x="10" y="9" width="1" height="1" fill="#0000ff"/><rect x="11" y="9" width="1" height="1" fill="#ffffff"/><rect x="12" y="9" width="1" height="1" fill="#000000"/><rect x="13" y="9" width="1" height="1" fill="#ffff00"/><rect x="14" y="9" width="1" height="1" fill="#808080"/><rect x="15" y="9" width="1" height="1" fill="#000000"/><rect x="0" y="10" width="1" height="1" fill="#808080"/><rect x="1" y="10" width="1" height="1" fill="#ffffff"/><rect x="2" y="10" width="1" height="1" fill="#ffff00"/><rect x="3" y="10" width="1" height="1" fill="#000000"/><rect x="4" y="10" width="1" height="1" fill="#ffff00"/><rect x="5" y="10" width="1" height="1" fill="#000000"/><rect x="6" y="10" width="1" height="1" fill="#ffffff"/><rect x="7" y="10" width="1" height="1" fill="#ff0000"/><rect x="8" y="10" width="3" height="1" fill="#c0c0c0"/><rect x="11" y="10" width="1" height="1" fill="#ffffff"/><rect x="12" y="10" width="1" height="1" fill="#000000"/><rect x="13" y="10" width="1" height="1" fill="#c0c0c0"/><rect x="14" y="10" width="1" height="1" fill="#808080"/><rect x="15" y="10" width="1" height="1" fill="#000000"/><rect x="0" y="11" width="1" height="1" fill="#808080"/><rect x="1" y="11" width="1" height="1" fill="#ffffff"/><rect x="2" y="11" width="1" height="1" fill="#c0c0c0"/><rect x="3" y="11" width="1" height="1" fill="#ffff00"/><rect x="4" y="11" width="1" height="1" fill="#000000"/><rect x="5" y="11" width="2" height="1" fill="#ffffff"/><rect x="7" y="11" width="1" height="1" fill="#ff0000"/><rect x="8" y="11" width="4" height="1" fill="#ffffff"/><rect x="12" y="11" width="1" height="1" fill="#000000"/><rect x="13" y="11" width="1" height="1" fill="#ffff00"/><rect x="14" y="11" width="1" height="1" fill="#808080"/><rect x="15" y="11" width="1" height="1" fill="#000000"/><rect x="0" y="12" width="1" height="1" fill="#808080"/><rect x="1" y="12" width="1" height="1" fill="#ffffff"/><rect x="2" y="12" width="1" height="1" fill="#ffff00"/><rect x="3" y="12" width="1" height="1" fill="#c0c0c0"/><rect x="4" y="12" width="1" height="1" fill="#000000"/><rect x="5" y="12" width="7" height="1" fill="#ffffff"/><rect x="12" y="12" width="1" height="1" fill="#000000"/><rect x="13" y="12" width="1" height="1" fill="#c0c0c0"/><rect x="14" y="12" width="1" height="1" fill="#808080"/><rect x="15" y="12" width="1" height="1" fill="#000000"/><rect x="0" y="13" width="1" height="1" fill="#808080"/><rect x="1" y="13" width="1" height="1" fill="#ffffff"/><rect x="2" y="13" width="1" height="1" fill="#c0c0c0"/><rect x="3" y="13" width="1" height="1" fill="#ffff00"/><rect x="4" y="13" width="9" height="1" fill="#000000"/><rect x="13" y="13" width="1" height="1" fill="#ffff00"/><rect x="14" y="13" width="1" height="1" fill="#808080"/><rect x="15" y="13" width="1" height="1" fill="#000000"/><rect x="0" y="14" width="15" height="1" fill="#808080"/><rect x="15" y="14" width="1" height="1" fill="#000000"/><rect x="1" y="15" width="15" height="1" fill="#000000"/></symbol><symbol id="sv" viewBox="0 0 16 16"><rect x="8" y="0" width="3" height="1" fill="#808080"/><rect x="8" y="1" width="3" height="1" fill="#c0c0c0"/><rect x="11" y="1" width="2" height="1" fill="#000000"/><rect x="8" y="2" width="2" height="1" fill="#ffffff"/><rect x="10" y="2" width="2" height="1" fill="#c0c0c0"/><rect x="12" y="2" width="1" height="1" fill="#000000"/><rect x="8" y="3" width="3" height="1" fill="#c0c0c0"/><rect x="11" y="3" width="2" height="1" fill="#000000"/><rect x="8" y="4" width="2" height="1" fill="#c0c0c0"/><rect x="10" y="4" width="1" height="1" fill="#000000"/><rect x="11" y="4" width="1" height="1" fill="#c0c0c0"/><rect x="12" y="4" width="1" height="1" fill="#000000"/><rect x="8" y="5" width="2" height="1" fill="#ffffff"/><rect x="10" y="5" width="2" height="1" fill="#c0c0c0"/><rect x="12" y="5" width="1" height="1" fill="#000000"/><rect x="8" y="6" width="3" height="1" fill="#c0c0c0"/><rect x="11" y="6" width="2" height="1" fill="#000000"/><rect x="8" y="7" width="2" height="1" fill="#c0c0c0"/><rect x="10" y="7" width="1" height="1" fill="#000000"/><rect x="11" y="7" width="1" height="1" fill="#c0c0c0"/><rect x="12" y="7" width="1" height="1" fill="#000000"/><rect x="8" y="8" width="2" height="1" fill="#ffffff"/><rect x="10" y="8" width="2" height="1" fill="#c0c0c0"/><rect x="12" y="8" width="1" height="1" fill="#000000"/><rect x="8" y="9" width="4" height="1" fill="#c0c0c0"/><rect x="12" y="9" width="1" height="1" fill="#000000"/><rect x="8" y="10" width="4" height="1" fill="#c0c0c0"/><rect x="12" y="10" width="1" height="1" fill="#000000"/><rect x="8" y="11" width="4" height="1" fill="#c0c0c0"/><rect x="12" y="11" width="1" height="1" fill="#000000"/><rect x="8" y="12" width="4" height="1" fill="#c0c0c0"/><rect x="12" y="12" width="1" height="1" fill="#000000"/><rect x="8" y="13" width="1" height="1" fill="#ff0000"/><rect x="9" y="13" width="2" height="1" fill="#c0c0c0"/><rect x="11" y="13" width="2" height="1" fill="#000000"/><rect x="8" y="14" width="3" height="1" fill="#c0c0c0"/><rect x="11" y="14" width="1" height="1" fill="#000000"/><rect x="8" y="15" width="3" height="1" fill="#000000"/></symbol><symbol id="ap" viewBox="0 0 16 16"><rect x="7" y="1" width="4" height="1" fill="#000000"/><rect x="6" y="2" width="1" height="1" fill="#000000"/><rect x="7" y="2" width="1" height="1" fill="#ffffff"/><rect x="8" y="2" width="1" height="1" fill="#0000c0"/><rect x="9" y="2" width="1" height="1" fill="#008000"/><rect x="10" y="2" width="1" height="1" fill="#0000c0"/><rect x="11" y="2" width="1" height="1" fill="#000000"/><rect x="6" y="3" width="1" height="1" fill="#000000"/><rect x="7" y="3" width="3" height="1" fill="#0000c0"/><rect x="10" y="3" width="1" height="1" fill="#008000"/><rect x="11" y="3" width="1" height="1" fill="#000000"/><rect x="6" y="4" width="1" height="1" fill="#000000"/><rect x="7" y="4" width="1" height="1" fill="#008000"/><rect x="8" y="4" width="3" height="1" fill="#0000c0"/><rect x="11" y="4" width="1" height="1" fill="#000000"/><rect x="6" y="5" width="1" height="1" fill="#000000"/><rect x="7" y="5" width="1" height="1" fill="#0000c0"/><rect x="8" y="5" width="1" height="1" fill="#008000"/><rect x="9" y="5" width="2" height="1" fill="#0000c0"/><rect x="11" y="5" width="1" height="1" fill="#000000"/><rect x="7" y="6" width="4" height="1" fill="#000000"/><rect x="5" y="8" width="6" height="1" fill="#808080"/><rect x="11" y="8" width="1" height="1" fill="#000000"/><rect x="5" y="9" width="5" height="1" fill="#000080"/><rect x="10" y="9" width="1" height="1" fill="#ffffff"/><rect x="11" y="9" width="1" height="1" fill="#000000"/><rect x="5" y="10" width="6" height="1" fill="#ffffff"/><rect x="11" y="10" width="1" height="1" fill="#000000"/><rect x="5" y="11" width="6" height="1" fill="#ffffff"/><rect x="11" y="11" width="1" height="1" fill="#000000"/><rect x="1" y="12" width="6" height="1" fill="#808080"/><rect x="7" y="12" width="1" height="1" fill="#000000"/><rect x="9" y="12" width="6" height="1" fill="#808080"/><rect x="15" y="12" width="1" height="1" fill="#000000"/><rect x="1" y="13" width="5" height="1" fill="#000080"/><rect x="6" y="13" width="1" height="1" fill="#ffffff"/><rect x="7" y="13" width="1" height="1" fill="#000000"/><rect x="9" y="13" width="5" height="1" fill="#000080"/><rect x="14" y="13" width="1" height="1" fill="#ffffff"/><rect x="15" y="13" width="1" height="1" fill="#000000"/><rect x="1" y="14" width="6" height="1" fill="#ffffff"/><rect x="7" y="14" width="1" height="1" fill="#000000"/><rect x="9" y="14" width="6" height="1" fill="#ffffff"/><rect x="15" y="14" width="1" height="1" fill="#000000"/><rect x="1" y="15" width="6" height="1" fill="#ffffff"/><rect x="7" y="15" width="1" height="1" fill="#000000"/><rect x="9" y="15" width="6" height="1" fill="#ffffff"/><rect x="15" y="15" width="1" height="1" fill="#000000"/></symbol><symbol id="mi" viewBox="0 0 9 9"><rect x="0.5" y="0.5" width="8" height="8" fill="#fff" stroke="#808080"/><rect x="2" y="4" width="5" height="1" fill="#000"/></symbol><symbol id="pl" viewBox="0 0 9 9"><rect x="0.5" y="0.5" width="8" height="8" fill="#fff" stroke="#808080"/><rect x="2" y="4" width="5" height="1" fill="#000"/><rect x="4" y="2" width="1" height="5" fill="#000"/></symbol></defs></svg><div style="left:1px;top:1px;width:1142px;height:1px;background:#ffffff;"></div><div style="left:1px;top:1px;width:1px;height:878px;background:#ffffff;"></div><div style="left:1px;top:879px;width:1142px;height:1px;background:#808080;"></div><div style="left:0px;top:880px;width:1143px;height:1px;background:#404040;"></div><div style="left:4px;top:4px;width:1137px;height:18px;background:linear-gradient(90deg,#808080,#c0c0c0);"></div><svg class="i" style="left:6px;top:5px" width="16" height="16"><use href="#ap"/></svg><div style="left:122px;top:9px;width:5px;height:4px;background:#bcb9b2;"></div><div style="left:122px;top:13px;width:5px;height:4px;background:#c4c1ba;"></div><div style="left:127px;top:9px;width:5px;height:4px;background:#c4c1ba;"></div><div style="left:127px;top:13px;width:5px;height:4px;background:#bcb9b2;"></div><div style="left:132px;top:9px;width:5px;height:4px;background:#a8a6a0;"></div><div style="left:132px;top:13px;width:5px;height:4px;background:#c4c1ba;"></div><div style="left:137px;top:9px;width:5px;height:4px;background:#b4b2ac;"></div><div style="left:137px;top:13px;width:5px;height:4px;background:#acaaa4;"></div><div style="left:142px;top:9px;width:5px;height:4px;background:#c4c1ba;"></div><div style="left:142px;top:13px;width:5px;height:4px;background:#b0aea8;"></div><div style="left:147px;top:9px;width:5px;height:4px;background:#c4c1ba;"></div><div style="left:147px;top:13px;width:5px;height:4px;background:#b0aea8;"></div><div style="left:152px;top:9px;width:5px;height:4px;background:#b8b5ae;"></div><div style="left:152px;top:13px;width:5px;height:4px;background:#b4b2ac;"></div><div style="left:157px;top:9px;width:5px;height:4px;background:#a8a6a0;"></div><div style="left:157px;top:13px;width:5px;height:4px;background:#c4c1ba;"></div><div style="left:162px;top:9px;width:5px;height:4px;background:#bcb9b2;"></div><div style="left:162px;top:13px;width:5px;height:4px;background:#bcb9b2;"></div><div style="left:167px;top:9px;width:5px;height:4px;background:#acaaa4;"></div><div style="left:167px;top:13px;width:5px;height:4px;background:#b4b2ac;"></div><div style="left:172px;top:9px;width:5px;height:4px;background:#c4c1ba;"></div><div style="left:172px;top:13px;width:5px;height:4px;background:#b8b5ae;"></div><div style="left:177px;top:9px;width:5px;height:4px;background:#c4c1ba;"></div><div style="left:177px;top:13px;width:5px;height:4px;background:#b4b2ac;"></div><div style="left:182px;top:9px;width:5px;height:4px;background:#b4b2ac;"></div><div style="left:182px;top:13px;width:5px;height:4px;background:#acaaa4;"></div><div style="left:187px;top:9px;width:5px;height:4px;background:#b8b5ae;"></div><div style="left:187px;top:13px;width:5px;height:4px;background:#bcb9b2;"></div><div style="left:192px;top:9px;width:5px;height:4px;background:#bcb9b2;"></div><div style="left:192px;top:13px;width:5px;height:4px;background:#acaaa4;"></div><div style="left:197px;top:9px;width:5px;height:4px;background:#bcb9b2;"></div><div style="left:197px;top:13px;width:5px;height:4px;background:#b8b5ae;"></div><div style="left:202px;top:9px;width:2px;height:4px;background:#c4c1ba;"></div><div style="left:202px;top:13px;width:2px;height:4px;background:#b4b2ac;"></div><div style="left:350px;top:9px;width:5px;height:4px;background:#ccc9c2;"></div><div style="left:350px;top:13px;width:5px;height:4px;background:#b0aea8;"></div><div style="left:355px;top:9px;width:5px;height:4px;background:#b4b2ac;"></div><div style="left:355px;top:13px;width:5px;height:4px;background:#b0aea8;"></div><div style="left:360px;top:9px;width:5px;height:4px;background:#d0cdc6;"></div><div style="left:360px;top:13px;width:5px;height:4px;background:#b4b2ac;"></div><div style="left:365px;top:9px;width:5px;height:4px;background:#d0cdc6;"></div><div style="left:365px;top:13px;width:5px;height:4px;background:#b4b2ac;"></div><div style="left:370px;top:9px;width:5px;height:4px;background:#b4b2ac;"></div><div style="left:370px;top:13px;width:5px;height:4px;background:#ccc9c2;"></div><div style="left:375px;top:9px;width:5px;height:4px;background:#b8b6b0;"></div><div style="left:375px;top:13px;width:5px;height:4px;background:#d0cdc6;"></div><div style="left:380px;top:9px;width:5px;height:4px;background:#bcbab4;"></div><div style="left:380px;top:13px;width:5px;height:4px;background:#d0cdc6;"></div><div style="left:385px;top:9px;width:5px;height:4px;background:#c4c1ba;"></div><div style="left:385px;top:13px;width:5px;height:4px;background:#b4b2ac;"></div><div style="left:390px;top:9px;width:5px;height:4px;background:#b8b6b0;"></div><div style="left:390px;top:13px;width:5px;height:4px;background:#c4c1ba;"></div><div style="left:395px;top:9px;width:5px;height:4px;background:#b8b6b0;"></div><div style="left:395px;top:13px;width:5px;height:4px;background:#b0aea8;"></div><div style="left:400px;top:9px;width:5px;height:4px;background:#bcbab4;"></div><div style="left:400px;top:13px;width:5px;height:4px;background:#d0cdc6;"></div><div style="left:405px;top:9px;width:5px;height:4px;background:#c4c1ba;"></div><div style="left:405px;top:13px;width:5px;height:4px;background:#bcbab4;"></div><div style="left:410px;top:9px;width:5px;height:4px;background:#ccc9c2;"></div><div style="left:410px;top:13px;width:5px;height:4px;background:#b8b6b0;"></div><div style="left:415px;top:9px;width:5px;height:4px;background:#ccc9c2;"></div><div style="left:415px;top:13px;width:5px;height:4px;background:#c4c1ba;"></div><div style="left:420px;top:9px;width:5px;height:4px;background:#b8b6b0;"></div><div style="left:420px;top:13px;width:5px;height:4px;background:#b4b2ac;"></div><div style="left:425px;top:9px;width:5px;height:4px;background:#c4c1ba;"></div><div style="left:425px;top:13px;width:5px;height:4px;background:#bcbab4;"></div><div style="left:430px;top:9px;width:5px;height:4px;background:#b0aea8;"></div><div style="left:430px;top:13px;width:5px;height:4px;background:#c4c1ba;"></div><div style="left:435px;top:9px;width:5px;height:4px;background:#d0cdc6;"></div><div style="left:435px;top:13px;width:5px;height:4px;background:#d0cdc6;"></div><div style="left:1089px;top:6px;width:16px;height:14px;background:#d4d0c8;"></div><div style="left:1089px;top:6px;width:15px;height:1px;background:#ffffff;"></div><div style="left:1089px;top:6px;width:1px;height:13px;background:#ffffff;"></div><div style="left:1090px;top:7px;width:13px;height:1px;background:#d4d0c8;"></div><div style="left:1090px;top:7px;width:1px;height:11px;background:#d4d0c8;"></div><div style="left:1089px;top:19px;width:16px;height:1px;background:#404040;"></div><div style="left:1104px;top:6px;width:1px;height:14px;background:#404040;"></div><div style="left:1090px;top:18px;width:14px;height:1px;background:#808080;"></div><div style="left:1103px;top:7px;width:1px;height:12px;background:#808080;"></div><div style="left:1093px;top:15px;width:6px;height:2px;background:#000;"></div><div style="left:1105px;top:6px;width:16px;height:14px;background:#d4d0c8;"></div><div style="left:1105px;top:6px;width:15px;height:1px;background:#ffffff;"></div><div style="left:1105px;top:6px;width:1px;height:13px;background:#ffffff;"></div><div style="left:1106px;top:7px;width:13px;height:1px;background:#d4d0c8;"></div><div style="left:1106px;top:7px;width:1px;height:11px;background:#d4d0c8;"></div><div style="left:1105px;top:19px;width:16px;height:1px;background:#404040;"></div><div style="left:1120px;top:6px;width:1px;height:14px;background:#404040;"></div><div style="left:1106px;top:18px;width:14px;height:1px;background:#808080;"></div><div style="left:1119px;top:7px;width:1px;height:12px;background:#808080;"></div><div style="left:1108px;top:8px;width:9px;height:2px;background:#000;"></div><div style="left:1108px;top:10px;width:1px;height:7px;background:#000;"></div><div style="left:1116px;top:10px;width:1px;height:7px;background:#000;"></div><div style="left:1108px;top:16px;width:9px;height:1px;background:#000;"></div><div style="left:1123px;top:6px;width:16px;height:14px;background:#d4d0c8;"></div><div style="left:1123px;top:6px;width:15px;height:1px;background:#ffffff;"></div><div style="left:1123px;top:6px;width:1px;height:13px;background:#ffffff;"></div><div style="left:1124px;top:7px;width:13px;height:1px;background:#d4d0c8;"></div><div style="left:1124px;top:7px;width:1px;height:11px;background:#d4d0c8;"></div><div style="left:1123px;top:19px;width:16px;height:1px;background:#404040;"></div><div style="left:1138px;top:6px;width:1px;height:14px;background:#404040;"></div><div style="left:1124px;top:18px;width:14px;height:1px;background:#808080;"></div><div style="left:1137px;top:7px;width:1px;height:12px;background:#808080;"></div><svg class="i" style="left:1127px;top:9px" width="8" height="7"><rect x="0" y="0" width="2" height="1" fill="#000"/><rect x="6" y="0" width="2" height="1" fill="#000"/><rect x="1" y="1" width="2" height="1" fill="#000"/><rect x="5" y="1" width="2" height="1" fill="#000"/><rect x="2" y="2" width="2" height="1" fill="#000"/><rect x="4" y="2" width="2" height="1" fill="#000"/><rect x="3" y="3" width="2" height="1" fill="#000"/><rect x="3" y="3" width="2" height="1" fill="#000"/><rect x="2" y="4" width="2" height="1" fill="#000"/><rect x="4" y="4" width="2" height="1" fill="#000"/><rect x="1" y="5" width="2" height="1" fill="#000"/><rect x="5" y="5" width="2" height="1" fill="#000"/><rect x="0" y="6" width="2" height="1" fill="#000"/><rect x="6" y="6" width="2" height="1" fill="#000"/></svg><div style="left:4px;top:23px;width:1137px;height:1px;background:#808080;"></div><div style="left:5px;top:24px;width:1136px;height:1px;background:#ffffff;"></div><div style="left:4px;top:23px;width:1px;height:50px;background:#808080;"></div><div style="left:5px;top:24px;width:1px;height:48px;background:#ffffff;"></div><div style="left:1139px;top:24px;width:1px;height:48px;background:#808080;"></div><div style="left:1140px;top:23px;width:1px;height:50px;background:#ffffff;"></div><div style="left:5px;top:47px;width:1135px;height:1px;background:#808080;"></div><div style="left:5px;top:48px;width:1135px;height:1px;background:#ffffff;"></div><div style="left:5px;top:71px;width:1135px;height:1px;background:#808080;"></div><div style="left:4px;top:72px;width:1137px;height:1px;background:#ffffff;"></div><div style="left:1083px;top:25px;width:1px;height:22px;background:#808080;"></div><div style="left:1084px;top:25px;width:1px;height:22px;background:#ffffff;"></div><svg class="i" style="left:6px;top:28px" width="16" height="16"><use href="#ap"/></svg><div style="left:1087px;top:29px;width:16px;height:14px;background:#d4d0c8;"></div><div style="left:1087px;top:29px;width:15px;height:1px;background:#ffffff;"></div><div style="left:1087px;top:29px;width:1px;height:13px;background:#ffffff;"></div><div style="left:1088px;top:30px;width:13px;height:1px;background:#d4d0c8;"></div><div style="left:1088px;top:30px;width:1px;height:11px;background:#d4d0c8;"></div><div style="left:1087px;top:42px;width:16px;height:1px;background:#404040;"></div><div style="left:1102px;top:29px;width:1px;height:14px;background:#404040;"></div><div style="left:1088px;top:41px;width:14px;height:1px;background:#808080;"></div><div style="left:1101px;top:30px;width:1px;height:12px;background:#808080;"></div><div style="left:1091px;top:38px;width:6px;height:2px;background:#000;"></div><div style="left:1103px;top:29px;width:16px;height:14px;background:#d4d0c8;"></div><div style="left:1103px;top:29px;width:15px;height:1px;background:#ffffff;"></div><div style="left:1103px;top:29px;width:1px;height:13px;background:#ffffff;"></div><div style="left:1104px;top:30px;width:13px;height:1px;background:#d4d0c8;"></div><div style="left:1104px;top:30px;width:1px;height:11px;background:#d4d0c8;"></div><div style="left:1103px;top:42px;width:16px;height:1px;background:#404040;"></div><div style="left:1118px;top:29px;width:1px;height:14px;background:#404040;"></div><div style="left:1104px;top:41px;width:14px;height:1px;background:#808080;"></div><div style="left:1117px;top:30px;width:1px;height:12px;background:#808080;"></div><div style="left:1108px;top:32px;width:6px;height:2px;background:#000;"></div><div style="left:1108px;top:34px;width:1px;height:3px;background:#000;"></div><div style="left:1113px;top:34px;width:1px;height:3px;background:#000;"></div><div style="left:1111px;top:36px;width:3px;height:1px;background:#000;"></div><div style="left:1106px;top:35px;width:6px;height:2px;background:#000;"></div><div style="left:1106px;top:37px;width:1px;height:4px;background:#000;"></div><div style="left:1111px;top:37px;width:1px;height:4px;background:#000;"></div><div style="left:1106px;top:40px;width:6px;height:1px;background:#000;"></div><div style="left:1121px;top:29px;width:16px;height:14px;background:#d4d0c8;"></div><div style="left:1121px;top:29px;width:15px;height:1px;background:#ffffff;"></div><div style="left:1121px;top:29px;width:1px;height:13px;background:#ffffff;"></div><div style="left:1122px;top:30px;width:13px;height:1px;background:#d4d0c8;"></div><div style="left:1122px;top:30px;width:1px;height:11px;background:#d4d0c8;"></div><div style="left:1121px;top:42px;width:16px;height:1px;background:#404040;"></div><div style="left:1136px;top:29px;width:1px;height:14px;background:#404040;"></div><div style="left:1122px;top:41px;width:14px;height:1px;background:#808080;"></div><div style="left:1135px;top:30px;width:1px;height:12px;background:#808080;"></div><svg class="i" style="left:1126px;top:33px" width="8" height="7"><rect x="0" y="0" width="2" height="1" fill="#fff"/><rect x="6" y="0" width="2" height="1" fill="#fff"/><rect x="1" y="1" width="2" height="1" fill="#fff"/><rect x="5" y="1" width="2" height="1" fill="#fff"/><rect x="2" y="2" width="2" height="1" fill="#fff"/><rect x="4" y="2" width="2" height="1" fill="#fff"/><rect x="3" y="3" width="2" height="1" fill="#fff"/><rect x="3" y="3" width="2" height="1" fill="#fff"/><rect x="2" y="4" width="2" height="1" fill="#fff"/><rect x="4" y="4" width="2" height="1" fill="#fff"/><rect x="1" y="5" width="2" height="1" fill="#fff"/><rect x="5" y="5" width="2" height="1" fill="#fff"/><rect x="0" y="6" width="2" height="1" fill="#fff"/><rect x="6" y="6" width="2" height="1" fill="#fff"/></svg><svg class="i" style="left:1125px;top:32px" width="8" height="7"><rect x="0" y="0" width="2" height="1" fill="#808080"/><rect x="6" y="0" width="2" height="1" fill="#808080"/><rect x="1" y="1" width="2" height="1" fill="#808080"/><rect x="5" y="1" width="2" height="1" fill="#808080"/><rect x="2" y="2" width="2" height="1" fill="#808080"/><rect x="4" y="2" width="2" height="1" fill="#808080"/><rect x="3" y="3" width="2" height="1" fill="#808080"/><rect x="3" y="3" width="2" height="1" fill="#808080"/><rect x="2" y="4" width="2" height="1" fill="#808080"/><rect x="4" y="4" width="2" height="1" fill="#808080"/><rect x="1" y="5" width="2" height="1" fill="#808080"/><rect x="5" y="5" width="2" height="1" fill="#808080"/><rect x="0" y="6" width="2" height="1" fill="#808080"/><rect x="6" y="6" width="2" height="1" fill="#808080"/></svg><svg class="i" style="left:0;top:0" width="320" height="75"><rect x="15" y="55" width="1" height="1" fill="#000"/><rect x="14" y="56" width="2" height="1" fill="#000"/><rect x="13" y="57" width="3" height="1" fill="#000"/><rect x="12" y="58" width="11" height="1" fill="#000"/><rect x="11" y="59" width="12" height="1" fill="#000"/><rect x="11" y="60" width="12" height="1" fill="#000"/><rect x="12" y="61" width="11" height="1" fill="#000"/><rect x="13" y="62" width="3" height="1" fill="#000"/><rect x="14" y="63" width="2" height="1" fill="#000"/><rect x="15" y="64" width="1" height="1" fill="#000"/><rect x="14" y="57" width="1" height="1" fill="#00ffff"/><rect x="13" y="58" width="2" height="1" fill="#00ffff"/><rect x="12" y="59" width="10" height="1" fill="#00ffff"/><rect x="12" y="60" width="10" height="1" fill="#00ffff"/><rect x="13" y="61" width="2" height="1" fill="#00ffff"/><rect x="14" y="62" width="1" height="1" fill="#00ffff"/><rect x="42" y="56" width="1" height="1" fill="#fff"/><rect x="42" y="57" width="2" height="1" fill="#fff"/><rect x="42" y="58" width="3" height="1" fill="#fff"/><rect x="35" y="59" width="11" height="1" fill="#fff"/><rect x="35" y="60" width="12" height="1" fill="#fff"/><rect x="35" y="61" width="12" height="1" fill="#fff"/><rect x="35" y="62" width="11" height="1" fill="#fff"/><rect x="42" y="63" width="3" height="1" fill="#fff"/><rect x="42" y="64" width="2" height="1" fill="#fff"/><rect x="42" y="65" width="1" height="1" fill="#fff"/><rect x="41" y="55" width="1" height="1" fill="#808080"/><rect x="41" y="56" width="2" height="1" fill="#808080"/><rect x="41" y="57" width="3" height="1" fill="#808080"/><rect x="34" y="58" width="11" height="1" fill="#808080"/><rect x="34" y="59" width="12" height="1" fill="#808080"/><rect x="34" y="60" width="12" height="1" fill="#808080"/><rect x="34" y="61" width="11" height="1" fill="#808080"/><rect x="41" y="62" width="3" height="1" fill="#808080"/><rect x="41" y="63" width="2" height="1" fill="#808080"/><rect x="41" y="64" width="1" height="1" fill="#808080"/><rect x="55" y="51" width="1" height="18" fill="#808080"/><rect x="56" y="51" width="1" height="18" fill="#fff"/><rect x="109" y="51" width="1" height="18" fill="#808080"/><rect x="110" y="51" width="1" height="18" fill="#fff"/><rect x="186" y="51" width="1" height="18" fill="#808080"/><rect x="187" y="51" width="1" height="18" fill="#fff"/><rect x="240" y="51" width="1" height="18" fill="#808080"/><rect x="241" y="51" width="1" height="18" fill="#fff"/><rect x="66" y="53" width="5" height="1" fill="#000"/><rect x="65" y="54" width="1" height="1" fill="#000"/><rect x="71" y="54" width="1" height="1" fill="#000"/><rect x="64" y="55" width="2" height="1" fill="#000"/><rect x="71" y="55" width="8" height="1" fill="#000"/><rect x="64" y="55" width="1" height="11" fill="#000"/><rect x="78" y="55" width="1" height="11" fill="#000"/><rect x="64" y="65" width="15" height="1" fill="#000"/><rect x="66" y="54" width="5" height="2" fill="url(#dyw)"/><rect x="65" y="56" width="13" height="9" fill="url(#dyw)"/><rect x="69" y="57" width="2" height="1" fill="#000"/><rect x="68" y="58" width="4" height="1" fill="#000"/><rect x="67" y="59" width="6" height="1" fill="#000"/><rect x="69" y="60" width="2" height="1" fill="#000"/><rect x="69" y="61" width="2" height="1" fill="#000"/><rect x="69" y="62" width="6" height="1" fill="#000"/><rect x="84" y="50" width="21" height="20" fill="url(#dfw)"/><rect x="83" y="49" width="23" height="1" fill="#808080"/><rect x="83" y="49" width="1" height="22" fill="#808080"/><rect x="83" y="70" width="23" height="1" fill="#fff"/><rect x="105" y="49" width="1" height="22" fill="#fff"/><rect x="88" y="54" width="14" height="12" fill="#000080"/><rect x="89" y="56" width="4" height="9" fill="#fff"/><rect x="94" y="56" width="7" height="9" fill="#c0c0c0"/><rect x="90" y="58" width="2" height="1" fill="#000"/><rect x="90" y="60" width="2" height="1" fill="#000"/><rect x="90" y="62" width="2" height="1" fill="#000"/><rect x="95" y="60" width="1" height="1" fill="#000"/><rect x="96" y="59" width="1" height="3" fill="#000"/><rect x="97" y="58" width="1" height="5" fill="#000"/><rect x="118" y="53" width="3" height="1" fill="#ff0000"/><rect x="118" y="54" width="4" height="1" fill="#ff0000"/><rect x="119" y="55" width="4" height="1" fill="#ff0000"/><rect x="121" y="56" width="3" height="1" fill="#ff0000"/><rect x="122" y="57" width="5" height="1" fill="#ff0000"/><rect x="123" y="58" width="4" height="1" fill="#ff0000"/><rect x="122" y="59" width="4" height="1" fill="#ff0000"/><rect x="121" y="60" width="4" height="1" fill="#ff0000"/><rect x="120" y="61" width="3" height="1" fill="#ff0000"/><rect x="119" y="62" width="3" height="1" fill="#ff0000"/><rect x="118" y="63" width="4" height="1" fill="#ff0000"/><rect x="118" y="64" width="3" height="1" fill="#ff0000"/><rect x="119" y="65" width="1" height="1" fill="#ff0000"/><rect x="130" y="53" width="1" height="1" fill="#ff0000"/><rect x="128" y="54" width="2" height="1" fill="#ff0000"/><rect x="127" y="55" width="2" height="1" fill="#ff0000"/><rect x="126" y="56" width="2" height="1" fill="#ff0000"/><rect x="126" y="60" width="2" height="1" fill="#ff0000"/><rect x="127" y="61" width="2" height="1" fill="#ff0000"/><rect x="128" y="62" width="1" height="1" fill="#ff0000"/><rect x="129" y="63" width="1" height="1" fill="#ff0000"/><rect x="130" y="65" width="1" height="1" fill="#ff0000"/><g transform="translate(140,52)"><rect x="7" y="1" width="6" height="1" fill="#000000"/><rect x="14" y="1" width="2" height="1" fill="#000080"/><rect x="6" y="2" width="1" height="1" fill="#000000"/><rect x="7" y="2" width="1" height="1" fill="#ffffff"/><rect x="8" y="2" width="5" height="1" fill="#c0c0c0"/><rect x="13" y="2" width="1" height="1" fill="#000000"/><rect x="14" y="2" width="2" height="1" fill="#000080"/><rect x="5" y="3" width="1" height="1" fill="#000000"/><rect x="6" y="3" width="1" height="1" fill="#ffffff"/><rect x="7" y="3" width="1" height="1" fill="#000000"/><rect x="8" y="3" width="5" height="1" fill="#c0c0c0"/><rect x="14" y="3" width="2" height="1" fill="#000080"/><rect x="0" y="4" width="5" height="1" fill="#000000"/><rect x="5" y="4" width="1" height="1" fill="#ffffff"/><rect x="6" y="4" width="1" height="1" fill="#000000"/><rect x="7" y="4" width="1" height="1" fill="#ffffff"/><rect x="8" y="4" width="1" height="1" fill="#000000"/><rect x="9" y="4" width="4" height="1" fill="#c0c0c0"/><rect x="14" y="4" width="2" height="1" fill="#000080"/><rect x="0" y="5" width="1" height="1" fill="#000000"/><rect x="1" y="5" width="4" height="1" fill="#ffffff"/><rect x="5" y="5" width="1" height="1" fill="#000000"/><rect x="6" y="5" width="1" height="1" fill="#ffffff"/><rect x="7" y="5" width="1" height="1" fill="#000000"/><rect x="8" y="5" width="1" height="1" fill="#ffffff"/><rect x="9" y="5" width="1" height="1" fill="#000000"/><rect x="10" y="5" width="3" height="1" fill="#c0c0c0"/><rect x="13" y="5" width="1" height="1" fill="#000000"/><rect x="14" y="5" width="2" height="1" fill="#000080"/><rect x="0" y="6" width="1" height="1" fill="#000000"/><rect x="1" y="6" width="1" height="1" fill="#ffffff"/><rect x="2" y="6" width="1" height="1" fill="#000000"/><rect x="3" y="6" width="1" height="1" fill="#ffffff"/><rect x="4" y="6" width="1" height="1" fill="#000000"/><rect x="5" y="6" width="1" height="1" fill="#ffffff"/><rect x="6" y="6" width="1" height="1" fill="#000000"/><rect x="7" y="6" width="1" height="1" fill="#ffffff"/><rect x="8" y="6" width="1" height="1" fill="#000000"/><rect x="9" y="6" width="1" height="1" fill="#ffffff"/><rect x="10" y="6" width="3" height="1" fill="#000000"/><rect x="14" y="6" width="2" height="1" fill="#000080"/><rect x="0" y="7" width="1" height="1" fill="#000000"/><rect x="1" y="7" width="1" height="1" fill="#ffffff"/><rect x="2" y="7" width="2" height="1" fill="#000000"/><rect x="4" y="7" width="3" height="1" fill="#ffffff"/><rect x="7" y="7" width="1" height="1" fill="#000000"/><rect x="8" y="7" width="1" height="1" fill="#ffffff"/><rect x="9" y="7" width="1" height="1" fill="#000000"/><rect x="10" y="7" width="1" height="1" fill="#ffffff"/><rect x="11" y="7" width="1" height="1" fill="#000000"/><rect x="0" y="8" width="1" height="1" fill="#000000"/><rect x="1" y="8" width="7" height="1" fill="#ffffff"/><rect x="8" y="8" width="1" height="1" fill="#000000"/><rect x="9" y="8" width="2" height="1" fill="#ffffff"/><rect x="11" y="8" width="1" height="1" fill="#000000"/><rect x="0" y="9" width="1" height="1" fill="#000000"/><rect x="1" y="9" width="10" height="1" fill="#ffffff"/><rect x="11" y="9" width="1" height="1" fill="#000000"/><rect x="0" y="10" width="1" height="1" fill="#000000"/><rect x="1" y="10" width="1" height="1" fill="#ffffff"/><rect x="2" y="10" width="2" height="1" fill="#000000"/><rect x="4" y="10" width="1" height="1" fill="#ffffff"/><rect x="5" y="10" width="5" height="1" fill="#000000"/><rect x="10" y="10" width="1" height="1" fill="#ffffff"/><rect x="11" y="10" width="1" height="1" fill="#000000"/><rect x="0" y="11" width="1" height="1" fill="#000000"/><rect x="1" y="11" width="10" height="1" fill="#ffffff"/><rect x="11" y="11" width="1" height="1" fill="#000000"/><rect x="0" y="12" width="1" height="1" fill="#000000"/><rect x="1" y="12" width="1" height="1" fill="#ffffff"/><rect x="2" y="12" width="2" height="1" fill="#000000"/><rect x="4" y="12" width="1" height="1" fill="#ffffff"/><rect x="5" y="12" width="5" height="1" fill="#000000"/><rect x="10" y="12" width="1" height="1" fill="#ffffff"/><rect x="11" y="12" width="1" height="1" fill="#000000"/><rect x="0" y="13" width="1" height="1" fill="#000000"/><rect x="1" y="13" width="10" height="1" fill="#ffffff"/><rect x="11" y="13" width="1" height="1" fill="#000000"/><rect x="0" y="14" width="12" height="1" fill="#000000"/></g><g transform="translate(163,52)"><rect x="2" y="1" width="9" height="1" fill="#000000"/><rect x="2" y="2" width="1" height="1" fill="#000000"/><rect x="3" y="2" width="7" height="1" fill="#ffffff"/><rect x="10" y="2" width="2" height="1" fill="#000000"/><rect x="2" y="3" width="1" height="1" fill="#000000"/><rect x="3" y="3" width="7" height="1" fill="#ffffff"/><rect x="10" y="3" width="1" height="1" fill="#000000"/><rect x="11" y="3" width="1" height="1" fill="#ffffff"/><rect x="12" y="3" width="1" height="1" fill="#000000"/><rect x="2" y="4" width="1" height="1" fill="#000000"/><rect x="3" y="4" width="1" height="1" fill="#ffffff"/><rect x="4" y="4" width="2" height="1" fill="#000080"/><rect x="6" y="4" width="4" height="1" fill="#ffffff"/><rect x="10" y="4" width="4" height="1" fill="#000000"/><rect x="2" y="5" width="1" height="1" fill="#000000"/><rect x="3" y="5" width="1" height="1" fill="#ffffff"/><rect x="4" y="5" width="2" height="1" fill="#000080"/><rect x="6" y="5" width="1" height="1" fill="#ffffff"/><rect x="7" y="5" width="4" height="1" fill="#000080"/><rect x="11" y="5" width="2" height="1" fill="#ffffff"/><rect x="13" y="5" width="1" height="1" fill="#000000"/><rect x="2" y="6" width="1" height="1" fill="#000000"/><rect x="3" y="6" width="10" height="1" fill="#ffffff"/><rect x="13" y="6" width="1" height="1" fill="#000000"/><rect x="2" y="7" width="1" height="1" fill="#000000"/><rect x="3" y="7" width="1" height="1" fill="#ffffff"/><rect x="4" y="7" width="2" height="1" fill="#000080"/><rect x="6" y="7" width="5" height="1" fill="#ffffff"/><rect x="11" y="7" width="3" height="1" fill="#000000"/><rect x="2" y="8" width="1" height="1" fill="#000000"/><rect x="3" y="8" width="1" height="1" fill="#ffffff"/><rect x="4" y="8" width="2" height="1" fill="#000080"/><rect x="6" y="8" width="1" height="1" fill="#ffffff"/><rect x="7" y="8" width="5" height="1" fill="#000000"/><rect x="12" y="8" width="1" height="1" fill="#c0c0c0"/><rect x="13" y="8" width="1" height="1" fill="#000000"/><rect x="2" y="9" width="1" height="1" fill="#000000"/><rect x="3" y="9" width="4" height="1" fill="#ffffff"/><rect x="7" y="9" width="1" height="1" fill="#000000"/><rect x="8" y="9" width="6" height="1" fill="#c0c0c0"/><rect x="14" y="9" width="1" height="1" fill="#000000"/><rect x="2" y="10" width="1" height="1" fill="#000000"/><rect x="3" y="10" width="1" height="1" fill="#ffffff"/><rect x="4" y="10" width="2" height="1" fill="#000080"/><rect x="6" y="10" width="1" height="1" fill="#ffffff"/><rect x="7" y="10" width="1" height="1" fill="#000000"/><rect x="8" y="10" width="7" height="1" fill="#c0c0c0"/><rect x="15" y="10" width="1" height="1" fill="#000000"/><rect x="2" y="11" width="1" height="1" fill="#000000"/><rect x="3" y="11" width="1" height="1" fill="#ffffff"/><rect x="4" y="11" width="2" height="1" fill="#000080"/><rect x="6" y="11" width="1" height="1" fill="#ffffff"/><rect x="7" y="11" width="1" height="1" fill="#000000"/><rect x="8" y="11" width="6" height="1" fill="#c0c0c0"/><rect x="14" y="11" width="1" height="1" fill="#000000"/><rect x="2" y="12" width="1" height="1" fill="#000000"/><rect x="3" y="12" width="4" height="1" fill="#ffffff"/><rect x="7" y="12" width="5" height="1" fill="#000000"/><rect x="12" y="12" width="1" height="1" fill="#c0c0c0"/><rect x="13" y="12" width="1" height="1" fill="#000000"/><rect x="2" y="13" width="1" height="1" fill="#000000"/><rect x="3" y="13" width="8" height="1" fill="#ffffff"/><rect x="11" y="13" width="3" height="1" fill="#000000"/><rect x="2" y="14" width="12" height="1" fill="#000000"/></g><g transform="translate(194,52)"><rect x="8" y="0" width="5" height="1" fill="#000000"/><rect x="7" y="1" width="1" height="1" fill="#000000"/><rect x="8" y="1" width="2" height="1" fill="#ffffff"/><rect x="10" y="1" width="3" height="1" fill="#ffff00"/><rect x="13" y="1" width="1" height="1" fill="#000000"/><rect x="6" y="2" width="1" height="1" fill="#000000"/><rect x="7" y="2" width="1" height="1" fill="#ffffff"/><rect x="8" y="2" width="6" height="1" fill="#ffff00"/><rect x="14" y="2" width="1" height="1" fill="#000000"/><rect x="5" y="3" width="1" height="1" fill="#000000"/><rect x="6" y="3" width="3" height="1" fill="#ffff00"/><rect x="9" y="3" width="2" height="1" fill="#000000"/><rect x="11" y="3" width="3" height="1" fill="#ffff00"/><rect x="14" y="3" width="1" height="1" fill="#000000"/><rect x="1" y="4" width="9" height="1" fill="#000000"/><rect x="10" y="4" width="1" height="1" fill="#c0c0c0"/><rect x="11" y="4" width="3" height="1" fill="#ffff00"/><rect x="14" y="4" width="1" height="1" fill="#000000"/><rect x="1" y="5" width="1" height="1" fill="#000000"/><rect x="2" y="5" width="3" height="1" fill="#ffffff"/><rect x="5" y="5" width="5" height="1" fill="#000000"/><rect x="10" y="5" width="1" height="1" fill="#c0c0c0"/><rect x="11" y="5" width="3" height="1" fill="#ffff00"/><rect x="14" y="5" width="1" height="1" fill="#000000"/><rect x="1" y="6" width="1" height="1" fill="#000000"/><rect x="2" y="6" width="7" height="1" fill="#ffffff"/><rect x="9" y="6" width="1" height="1" fill="#000000"/><rect x="10" y="6" width="3" height="1" fill="#ffff00"/><rect x="13" y="6" width="2" height="1" fill="#000000"/><rect x="1" y="7" width="1" height="1" fill="#000000"/><rect x="2" y="7" width="1" height="1" fill="#ffffff"/><rect x="3" y="7" width="5" height="1" fill="#808080"/><rect x="8" y="7" width="1" height="1" fill="#000000"/><rect x="9" y="7" width="3" height="1" fill="#ffff00"/><rect x="12" y="7" width="2" height="1" fill="#000000"/><rect x="1" y="8" width="1" height="1" fill="#000000"/><rect x="2" y="8" width="6" height="1" fill="#ffffff"/><rect x="8" y="8" width="1" height="1" fill="#000000"/><rect x="9" y="8" width="3" height="1" fill="#ffff00"/><rect x="12" y="8" width="1" height="1" fill="#000000"/><rect x="1" y="9" width="1" height="1" fill="#000000"/><rect x="2" y="9" width="1" height="1" fill="#ffffff"/><rect x="3" y="9" width="5" height="1" fill="#808080"/><rect x="8" y="9" width="5" height="1" fill="#000000"/><rect x="1" y="10" width="1" height="1" fill="#000000"/><rect x="2" y="10" width="7" height="1" fill="#ffffff"/><rect x="9" y="10" width="2" height="1" fill="#000000"/><rect x="1" y="11" width="1" height="1" fill="#000000"/><rect x="2" y="11" width="1" height="1" fill="#ffffff"/><rect x="3" y="11" width="5" height="1" fill="#808080"/><rect x="8" y="11" width="1" height="1" fill="#ffffff"/><rect x="9" y="11" width="3" height="1" fill="#000000"/><rect x="1" y="12" width="1" height="1" fill="#000000"/><rect x="2" y="12" width="6" height="1" fill="#ffffff"/><rect x="8" y="12" width="1" height="1" fill="#000000"/><rect x="9" y="12" width="1" height="1" fill="#ffffff"/><rect x="10" y="12" width="2" height="1" fill="#ffff00"/><rect x="12" y="12" width="1" height="1" fill="#000000"/><rect x="1" y="13" width="1" height="1" fill="#000000"/><rect x="2" y="13" width="6" height="1" fill="#ffffff"/><rect x="8" y="13" width="1" height="1" fill="#000000"/><rect x="9" y="13" width="3" height="1" fill="#ffff00"/><rect x="12" y="13" width="1" height="1" fill="#000000"/><rect x="1" y="14" width="12" height="1" fill="#000000"/></g><rect x="218" y="54" width="14" height="12" fill="#000080"/><rect x="219" y="56" width="7" height="9" fill="#c0c0c0"/><rect x="227" y="56" width="4" height="9" fill="#fff"/><rect x="228" y="58" width="2" height="1" fill="#000"/><rect x="228" y="60" width="2" height="1" fill="#000"/><rect x="228" y="62" width="2" height="1" fill="#000"/><rect x="222" y="58" width="1" height="5" fill="#000"/><rect x="223" y="59" width="1" height="3" fill="#000"/><rect x="224" y="60" width="1" height="1" fill="#000"/><rect x="251" y="53" width="10" height="15" fill="#fff"/><rect x="250" y="52" width="10" height="15" fill="#808080"/><rect x="251" y="54" width="6" height="1" fill="#fff"/><rect x="251" y="57" width="6" height="1" fill="#fff"/><rect x="251" y="60" width="6" height="1" fill="#fff"/><rect x="273" y="55" width="13" height="13" fill="#fff"/><rect x="272" y="54" width="13" height="13" fill="#808080"/><rect x="273" y="55" width="10" height="11" fill="#fff"/><rect x="273" y="52" width="11" height="2" fill="url(#dgf)"/><rect x="275" y="57" width="3" height="1" fill="#808080"/><rect x="279" y="57" width="2" height="1" fill="#808080"/><rect x="275" y="59" width="6" height="1" fill="#808080"/><rect x="275" y="61" width="6" height="1" fill="#808080"/><rect x="275" y="63" width="6" height="1" fill="#808080"/><rect x="296" y="52" width="5" height="1" fill="#808080"/><rect x="295" y="53" width="7" height="1" fill="#808080"/><rect x="294" y="54" width="14" height="1" fill="#808080"/><rect x="294" y="54" width="1" height="10" fill="#808080"/><rect x="295" y="55" width="12" height="1" fill="#fff"/><rect x="295" y="55" width="1" height="8" fill="#fff"/><rect x="296" y="56" width="13" height="9" fill="#808080"/><rect x="309" y="56" width="1" height="10" fill="#fff"/><rect x="304" y="65" width="6" height="1" fill="#fff"/><rect x="296" y="58" width="8" height="9" fill="#808080"/><rect x="297" y="59" width="5" height="7" fill="#fff"/><rect x="298" y="60" width="1" height="1" fill="#808080"/><rect x="298" y="62" width="3" height="1" fill="#808080"/><rect x="298" y="64" width="3" height="1" fill="#808080"/><rect x="297" y="67" width="8" height="1" fill="#fff"/><rect x="304" y="65" width="1" height="3" fill="#fff"/></svg><div style="left:6px;top:77px;width:297px;height:762px;background:#ffffff;"></div><div style="left:4px;top:75px;width:300px;height:1px;background:#808080;"></div><div style="left:4px;top:75px;width:1px;height:781px;background:#808080;"></div><div style="left:5px;top:76px;width:298px;height:1px;background:#404040;"></div><div style="left:5px;top:76px;width:1px;height:779px;background:#404040;"></div><div style="left:304px;top:75px;width:1px;height:782px;background:#ffffff;"></div><div style="left:4px;top:856px;width:301px;height:1px;background:#ffffff;"></div><div style="left:6px;top:839px;width:297px;height:16px;background:repeating-conic-gradient(#fff 0% 25%,#d4d0c8 0% 50%) 0 0/2px 2px;"></div><div style="left:6px;top:839px;width:16px;height:16px;background:#d4d0c8;"></div><div style="left:6px;top:839px;width:15px;height:1px;background:#d4d0c8;"></div><div style="left:6px;top:839px;width:1px;height:15px;background:#d4d0c8;"></div><div style="left:7px;top:840px;width:13px;height:1px;background:#ffffff;"></div><div style="left:7px;top:840px;width:1px;height:13px;background:#ffffff;"></div><div style="left:6px;top:854px;width:16px;height:1px;background:#404040;"></div><div style="left:21px;top:839px;width:1px;height:16px;background:#404040;"></div><div style="left:7px;top:853px;width:14px;height:1px;background:#808080;"></div><div style="left:20px;top:840px;width:1px;height:14px;background:#808080;"></div><div style="left:287px;top:839px;width:16px;height:16px;background:#d4d0c8;"></div><div style="left:287px;top:839px;width:15px;height:1px;background:#d4d0c8;"></div><div style="left:287px;top:839px;width:1px;height:15px;background:#d4d0c8;"></div><div style="left:288px;top:840px;width:13px;height:1px;background:#ffffff;"></div><div style="left:288px;top:840px;width:1px;height:13px;background:#ffffff;"></div><div style="left:287px;top:854px;width:16px;height:1px;background:#404040;"></div><div style="left:302px;top:839px;width:1px;height:16px;background:#404040;"></div><div style="left:288px;top:853px;width:14px;height:1px;background:#808080;"></div><div style="left:301px;top:840px;width:1px;height:14px;background:#808080;"></div><div style="left:46px;top:839px;width:241px;height:16px;background:#d4d0c8;"></div><div style="left:46px;top:839px;width:240px;height:1px;background:#d4d0c8;"></div><div style="left:46px;top:839px;width:1px;height:15px;background:#d4d0c8;"></div><div style="left:47px;top:840px;width:238px;height:1px;background:#ffffff;"></div><div style="left:47px;top:840px;width:1px;height:13px;background:#ffffff;"></div><div style="left:46px;top:854px;width:241px;height:1px;background:#404040;"></div><div style="left:286px;top:839px;width:1px;height:16px;background:#404040;"></div><div style="left:47px;top:853px;width:239px;height:1px;background:#808080;"></div><div style="left:285px;top:840px;width:1px;height:14px;background:#808080;"></div><svg class="i" style="left:11px;top:843px" width="8" height="8"><rect x="0" y="3" width="1" height="1" fill="#000"/><rect x="1" y="2" width="1" height="3" fill="#000"/><rect x="2" y="1" width="1" height="5" fill="#000"/><rect x="3" y="0" width="1" height="7" fill="#000"/></svg><svg class="i" style="left:293px;top:843px" width="8" height="8"><rect x="0" y="0" width="1" height="7" fill="#000"/><rect x="1" y="1" width="1" height="5" fill="#000"/><rect x="2" y="2" width="1" height="3" fill="#000"/><rect x="3" y="3" width="1" height="1" fill="#000"/></svg><div style="left:308px;top:75px;width:832px;height:23px;background:#808080;"></div><div style="left:308px;top:98px;width:833px;height:1px;background:#ffffff;"></div><div style="left:310px;top:101px;width:829px;height:754px;background:#ffffff;"></div><div style="left:308px;top:99px;width:832px;height:1px;background:#808080;"></div><div style="left:308px;top:99px;width:1px;height:757px;background:#808080;"></div><div style="left:309px;top:100px;width:830px;height:1px;background:#404040;"></div><div style="left:309px;top:100px;width:1px;height:755px;background:#404040;"></div><div style="left:1140px;top:75px;width:1px;height:782px;background:#ffffff;"></div><div style="left:308px;top:856px;width:833px;height:1px;background:#ffffff;"></div><div style="left:315px;top:83px;width:5px;height:4px;background:#989898;"></div><div style="left:315px;top:87px;width:5px;height:5px;background:#a8a8a8;"></div><div style="left:320px;top:83px;width:5px;height:4px;background:#d0d0d0;"></div><div style="left:320px;top:87px;width:5px;height:5px;background:#c0c0c0;"></div><div style="left:325px;top:83px;width:5px;height:4px;background:#989898;"></div><div style="left:325px;top:87px;width:5px;height:5px;background:#b0b0b0;"></div><div style="left:330px;top:83px;width:5px;height:4px;background:#a0a0a0;"></div><div style="left:330px;top:87px;width:5px;height:5px;background:#c0c0c0;"></div><div style="left:335px;top:83px;width:5px;height:4px;background:#989898;"></div><div style="left:335px;top:87px;width:5px;height:5px;background:#989898;"></div><div style="left:340px;top:83px;width:5px;height:4px;background:#d0d0d0;"></div><div style="left:340px;top:87px;width:5px;height:5px;background:#b0b0b0;"></div><div style="left:345px;top:83px;width:5px;height:4px;background:#e0e0e0;"></div><div style="left:345px;top:87px;width:5px;height:5px;background:#e0e0e0;"></div><div style="left:350px;top:83px;width:5px;height:4px;background:#e0e0e0;"></div><div style="left:350px;top:87px;width:5px;height:5px;background:#d0d0d0;"></div><div style="left:355px;top:83px;width:5px;height:4px;background:#e0e0e0;"></div><div style="left:355px;top:87px;width:5px;height:5px;background:#989898;"></div><div style="left:360px;top:83px;width:5px;height:4px;background:#d0d0d0;"></div><div style="left:360px;top:87px;width:5px;height:5px;background:#a0a0a0;"></div><div style="left:365px;top:83px;width:5px;height:4px;background:#e0e0e0;"></div><div style="left:365px;top:87px;width:5px;height:5px;background:#989898;"></div><div style="left:370px;top:83px;width:5px;height:4px;background:#b0b0b0;"></div><div style="left:370px;top:87px;width:5px;height:5px;background:#b8b8b8;"></div><div style="left:375px;top:83px;width:5px;height:4px;background:#d0d0d0;"></div><div style="left:375px;top:87px;width:5px;height:5px;background:#e0e0e0;"></div><div style="left:380px;top:83px;width:5px;height:4px;background:#d0d0d0;"></div><div style="left:380px;top:87px;width:5px;height:5px;background:#a0a0a0;"></div><div style="left:385px;top:83px;width:5px;height:4px;background:#b8b8b8;"></div><div style="left:385px;top:87px;width:5px;height:5px;background:#a0a0a0;"></div><div style="left:390px;top:83px;width:5px;height:4px;background:#a0a0a0;"></div><div style="left:390px;top:87px;width:5px;height:5px;background:#d0d0d0;"></div><div style="left:395px;top:83px;width:5px;height:4px;background:#d0d0d0;"></div><div style="left:395px;top:87px;width:5px;height:5px;background:#a0a0a0;"></div><div style="left:400px;top:83px;width:4px;height:4px;background:#b0b0b0;"></div><div style="left:400px;top:87px;width:4px;height:5px;background:#a8a8a8;"></div><div style="left:310px;top:101px;width:180px;height:17px;background:#d4d0c8;"></div><div style="left:310px;top:101px;width:179px;height:1px;background:#ffffff;"></div><div style="left:310px;top:101px;width:1px;height:16px;background:#ffffff;"></div><div style="left:310px;top:117px;width:180px;height:1px;background:#404040;"></div><div style="left:489px;top:101px;width:1px;height:17px;background:#404040;"></div><div style="left:311px;top:116px;width:178px;height:1px;background:#808080;"></div><div style="left:488px;top:102px;width:1px;height:15px;background:#808080;"></div><div style="left:490px;top:101px;width:150px;height:17px;background:#d4d0c8;"></div><div style="left:490px;top:101px;width:149px;height:1px;background:#ffffff;"></div><div style="left:490px;top:101px;width:1px;height:16px;background:#ffffff;"></div><div style="left:490px;top:117px;width:150px;height:1px;background:#404040;"></div><div style="left:639px;top:101px;width:1px;height:17px;background:#404040;"></div><div style="left:491px;top:116px;width:148px;height:1px;background:#808080;"></div><div style="left:638px;top:102px;width:1px;height:15px;background:#808080;"></div><div style="left:640px;top:101px;width:349px;height:17px;background:#d4d0c8;"></div><div style="left:640px;top:101px;width:348px;height:1px;background:#ffffff;"></div><div style="left:640px;top:101px;width:1px;height:16px;background:#ffffff;"></div><div style="left:640px;top:117px;width:349px;height:1px;background:#404040;"></div><div style="left:988px;top:101px;width:1px;height:17px;background:#404040;"></div><div style="left:641px;top:116px;width:347px;height:1px;background:#808080;"></div><div style="left:987px;top:102px;width:1px;height:15px;background:#808080;"></div><div style="left:989px;top:101px;width:134px;height:17px;background:#d4d0c8;"></div><div style="left:989px;top:101px;width:133px;height:1px;background:#ffffff;"></div><div style="left:989px;top:101px;width:1px;height:16px;background:#ffffff;"></div><div style="left:989px;top:117px;width:134px;height:1px;background:#404040;"></div><div style="left:1122px;top:101px;width:1px;height:17px;background:#404040;"></div><div style="left:990px;top:116px;width:132px;height:1px;background:#808080;"></div><div style="left:1121px;top:102px;width:1px;height:15px;background:#808080;"></div><svg class="i" style="left:354px;top:105px" width="11" height="9"><path d="M5.5 1 L1.5 8" stroke="#808080" fill="none"/><path d="M6 1 L9.5 8 M1.5 8.5 L10 8.5" stroke="#fff" fill="none"/></svg><div style="left:1123px;top:101px;width:16px;height:754px;background:repeating-conic-gradient(#fff 0% 25%,#d4d0c8 0% 50%) 0 0/2px 2px;"></div><div style="left:1123px;top:101px;width:16px;height:16px;background:#d4d0c8;"></div><div style="left:1123px;top:101px;width:15px;height:1px;background:#d4d0c8;"></div><div style="left:1123px;top:101px;width:1px;height:15px;background:#d4d0c8;"></div><div style="left:1124px;top:102px;width:13px;height:1px;background:#ffffff;"></div><div style="left:1124px;top:102px;width:1px;height:13px;background:#ffffff;"></div><div style="left:1123px;top:116px;width:16px;height:1px;background:#404040;"></div><div style="left:1138px;top:101px;width:1px;height:16px;background:#404040;"></div><div style="left:1124px;top:115px;width:14px;height:1px;background:#808080;"></div><div style="left:1137px;top:102px;width:1px;height:14px;background:#808080;"></div><div style="left:1123px;top:839px;width:16px;height:16px;background:#d4d0c8;"></div><div style="left:1123px;top:839px;width:15px;height:1px;background:#d4d0c8;"></div><div style="left:1123px;top:839px;width:1px;height:15px;background:#d4d0c8;"></div><div style="left:1124px;top:840px;width:13px;height:1px;background:#ffffff;"></div><div style="left:1124px;top:840px;width:1px;height:13px;background:#ffffff;"></div><div style="left:1123px;top:854px;width:16px;height:1px;background:#404040;"></div><div style="left:1138px;top:839px;width:1px;height:16px;background:#404040;"></div><div style="left:1124px;top:853px;width:14px;height:1px;background:#808080;"></div><div style="left:1137px;top:840px;width:1px;height:14px;background:#808080;"></div><div style="left:1123px;top:598px;width:16px;height:216px;background:#d4d0c8;"></div><div style="left:1123px;top:598px;width:15px;height:1px;background:#d4d0c8;"></div><div style="left:1123px;top:598px;width:1px;height:215px;background:#d4d0c8;"></div><div style="left:1124px;top:599px;width:13px;height:1px;background:#ffffff;"></div><div style="left:1124px;top:599px;width:1px;height:213px;background:#ffffff;"></div><div style="left:1123px;top:813px;width:16px;height:1px;background:#404040;"></div><div style="left:1138px;top:598px;width:1px;height:216px;background:#404040;"></div><div style="left:1124px;top:812px;width:14px;height:1px;background:#808080;"></div><div style="left:1137px;top:599px;width:1px;height:214px;background:#808080;"></div><svg class="i" style="left:1127px;top:107px" width="8" height="8"><rect x="3" y="0" width="1" height="1" fill="#000"/><rect x="2" y="1" width="3" height="1" fill="#000"/><rect x="1" y="2" width="5" height="1" fill="#000"/><rect x="0" y="3" width="7" height="1" fill="#000"/></svg><svg class="i" style="left:1127px;top:845px" width="8" height="8"><rect x="0" y="0" width="7" height="1" fill="#000"/><rect x="1" y="1" width="5" height="1" fill="#000"/><rect x="2" y="2" width="3" height="1" fill="#000"/><rect x="3" y="3" width="1" height="1" fill="#000"/></svg><div style="left:4px;top:859px;width:917px;height:1px;background:#808080;"></div><div style="left:4px;top:859px;width:1px;height:17px;background:#808080;"></div><div style="left:4px;top:876px;width:917px;height:1px;background:#ffffff;"></div><div style="left:920px;top:859px;width:1px;height:18px;background:#ffffff;"></div><div style="left:923px;top:859px;width:131px;height:1px;background:#808080;"></div><div style="left:923px;top:859px;width:1px;height:17px;background:#808080;"></div><div style="left:923px;top:876px;width:131px;height:1px;background:#ffffff;"></div><div style="left:1053px;top:859px;width:1px;height:18px;background:#ffffff;"></div><div style="left:1056px;top:859px;width:83px;height:1px;background:#808080;"></div><div style="left:1056px;top:859px;width:1px;height:17px;background:#808080;"></div><div style="left:1056px;top:876px;width:83px;height:1px;background:#ffffff;"></div><div style="left:1138px;top:859px;width:1px;height:18px;background:#ffffff;"></div><div id="clipL"><div style="left:-6px;top:-77px;width:310px;height:860px"><svg class="i" style="left:0;top:0" width="310" height="860"><path d="M-7 101.5H-2M-12.5 93V97M12 117.5H17M6.5 109V113M6.5 123V125M12 133.5H17M6.5 125V129M6.5 139V589M31 149.5H36M25.5 141V145M25.5 155V397M50 165.5H55M44.5 157V161M44.5 171V237M69 181.5H74M63.5 173V177M63.5 187V221M88 197.5H93M82.5 189V193M101 213.5H112M101.5 205V214M63 229.5H74M63.5 221V230M50 245.5H55M44.5 237V241M44.5 251V285M69 261.5H74M63.5 253V257M82 277.5H93M82.5 269V278M50 293.5H55M44.5 285V289M44.5 299V365M69 309.5H74M63.5 301V305M63.5 315V349M88 325.5H93M82.5 317V321M101 341.5H112M101.5 333V342M63 357.5H74M63.5 349V358M50 373.5H55M44.5 365V369M63 389.5H74M63.5 381V390M31 405.5H36M25.5 397V401M44 421.5H55M44.5 413V422M44.5 423V429M50 437.5H55M44.5 429V433M44.5 443V445M50 453.5H55M44.5 445V449M44.5 459V477M63 469.5H74M63.5 461V470M50 485.5H55M44.5 477V481M44.5 491V509M63 501.5H74M63.5 493V502M50 517.5H55M44.5 509V513M44.5 523V541M63 533.5H74M63.5 525V534M50 549.5H55M44.5 541V545M44.5 555V557M50 565.5H55M44.5 557V561M44.5 571V573M50 581.5H55M44.5 573V577M12 597.5H17M6.5 589V593M6.5 603V717M25 613.5H36M25.5 605V614M25.5 615V621M25 629.5H36M25.5 621V630M25.5 631V637M25 645.5H36M25.5 637V646M25.5 647V653M31 661.5H36M25.5 653V657M25.5 667V701M50 677.5H55M44.5 669V673M63 693.5H74M63.5 685V694M25 709.5H36M25.5 701V710M12 725.5H17M6.5 717V721" stroke="#808080" stroke-dasharray="1 1" fill="none"/></svg><svg class="i" style="left:-17px;top:97px" width="9" height="9"><use href="#mi"/></svg><svg class="i" style="left:-2px;top:93px" width="16" height="16"><use href="#sv"/></svg><svg class="i" style="left:2px;top:113px" width="9" height="9"><use href="#pl"/></svg><svg class="i" style="left:17px;top:109px" width="16" height="16"><use href="#fo"/></svg><svg class="i" style="left:2px;top:129px" width="9" height="9"><use href="#mi"/></svg><svg class="i" style="left:17px;top:125px" width="16" height="16"><use href="#fo"/></svg><svg class="i" style="left:21px;top:145px" width="9" height="9"><use href="#mi"/></svg><svg class="i" style="left:36px;top:141px" width="16" height="16"><use href="#zo"/></svg><svg class="i" style="left:40px;top:161px" width="9" height="9"><use href="#mi"/></svg><svg class="i" style="left:55px;top:157px" width="16" height="16"><use href="#fo"/></svg><svg class="i" style="left:59px;top:177px" width="9" height="9"><use href="#mi"/></svg><svg class="i" style="left:74px;top:173px" width="16" height="16"><use href="#fo"/></svg><svg class="i" style="left:78px;top:193px" width="9" height="9"><use href="#mi"/></svg><svg class="i" style="left:93px;top:189px" width="16" height="16"><use href="#fo"/></svg><svg class="i" style="left:112px;top:205px" width="16" height="16"><use href="#fo"/></svg><svg class="i" style="left:74px;top:221px" width="16" height="16"><use href="#fo"/></svg><svg class="i" style="left:40px;top:241px" width="9" height="9"><use href="#mi"/></svg><svg class="i" style="left:55px;top:237px" width="16" height="16"><use href="#fo"/></svg><svg class="i" style="left:59px;top:257px" width="9" height="9"><use href="#mi"/></svg><svg class="i" style="left:74px;top:253px" width="16" height="16"><use href="#fo"/></svg><svg class="i" style="left:93px;top:269px" width="16" height="16"><use href="#fo"/></svg><svg class="i" style="left:40px;top:289px" width="9" height="9"><use href="#mi"/></svg><svg class="i" style="left:55px;top:285px" width="16" height="16"><use href="#fo"/></svg><svg class="i" style="left:59px;top:305px" width="9" height="9"><use href="#mi"/></svg><svg class="i" style="left:74px;top:301px" width="16" height="16"><use href="#fo"/></svg><svg class="i" style="left:78px;top:321px" width="9" height="9"><use href="#mi"/></svg><svg class="i" style="left:93px;top:317px" width="16" height="16"><use href="#fo"/></svg><svg class="i" style="left:112px;top:333px" width="16" height="16"><use href="#fo"/></svg><svg class="i" style="left:74px;top:349px" width="16" height="16"><use href="#fo"/></svg><svg class="i" style="left:40px;top:369px" width="9" height="9"><use href="#mi"/></svg><svg class="i" style="left:55px;top:365px" width="16" height="16"><use href="#fo"/></svg><svg class="i" style="left:74px;top:381px" width="16" height="16"><use href="#fo"/></svg><div style="left:55px;top:397px;width:109px;height:16px;background:#d4d0c8;"></div><svg class="i" style="left:21px;top:401px" width="9" height="9"><use href="#mi"/></svg><svg class="i" style="left:36px;top:397px" width="16" height="16"><use href="#zo"/></svg><svg class="i" style="left:55px;top:413px" width="16" height="16"><use href="#de"/></svg><svg class="i" style="left:40px;top:433px" width="9" height="9"><use href="#pl"/></svg><svg class="i" style="left:55px;top:429px" width="16" height="16"><use href="#fo"/></svg><svg class="i" style="left:40px;top:449px" width="9" height="9"><use href="#mi"/></svg><svg class="i" style="left:55px;top:445px" width="16" height="16"><use href="#fo"/></svg><svg class="i" style="left:74px;top:461px" width="16" height="16"><use href="#fo"/></svg><svg class="i" style="left:40px;top:481px" width="9" height="9"><use href="#mi"/></svg><svg class="i" style="left:55px;top:477px" width="16" height="16"><use href="#fo"/></svg><svg class="i" style="left:74px;top:493px" width="16" height="16"><use href="#fo"/></svg><svg class="i" style="left:40px;top:513px" width="9" height="9"><use href="#mi"/></svg><svg class="i" style="left:55px;top:509px" width="16" height="16"><use href="#fo"/></svg><svg class="i" style="left:74px;top:525px" width="16" height="16"><use href="#fo"/></svg><svg class="i" style="left:40px;top:545px" width="9" height="9"><use href="#pl"/></svg><svg class="i" style="left:55px;top:541px" width="16" height="16"><use href="#fo"/></svg><svg class="i" style="left:40px;top:561px" width="9" height="9"><use href="#pl"/></svg><svg class="i" style="left:55px;top:557px" width="16" height="16"><use href="#fo"/></svg><svg class="i" style="left:40px;top:577px" width="9" height="9"><use href="#pl"/></svg><svg class="i" style="left:55px;top:573px" width="16" height="16"><use href="#fo"/></svg><svg class="i" style="left:2px;top:593px" width="9" height="9"><use href="#mi"/></svg><svg class="i" style="left:17px;top:589px" width="16" height="16"><use href="#fo"/></svg><svg class="i" style="left:36px;top:605px" width="16" height="16"><use href="#zo"/></svg><svg class="i" style="left:36px;top:621px" width="16" height="16"><use href="#zo"/></svg><svg class="i" style="left:36px;top:637px" width="16" height="16"><use href="#zo"/></svg><svg class="i" style="left:21px;top:657px" width="9" height="9"><use href="#mi"/></svg><svg class="i" style="left:36px;top:653px" width="16" height="16"><use href="#zo"/></svg><svg class="i" style="left:40px;top:673px" width="9" height="9"><use href="#mi"/></svg><svg class="i" style="left:55px;top:669px" width="16" height="16"><use href="#fo"/></svg><svg class="i" style="left:74px;top:685px" width="16" height="16"><use href="#fo"/></svg><svg class="i" style="left:36px;top:701px" width="16" height="16"><use href="#zo"/></svg><svg class="i" style="left:2px;top:721px" width="9" height="9"><use href="#pl"/></svg><svg class="i" style="left:17px;top:717px" width="16" height="16"><use href="#ev"/></svg><div style="left:22px;top:97px;width:5px;height:4px;background:#b8b8b8;"></div><div style="left:22px;top:101px;width:5px;height:4px;background:#e0e0e0;"></div><div style="left:27px;top:97px;width:5px;height:4px;background:#b8b8b8;"></div><div style="left:27px;top:101px;width:5px;height:4px;background:#b8b8b8;"></div><div style="left:32px;top:97px;width:5px;height:4px;background:#e0e0e0;"></div><div style="left:32px;top:101px;width:5px;height:4px;background:#b0b0b0;"></div><div style="left:37px;top:97px;width:5px;height:4px;background:#c0c0c0;"></div><div style="left:37px;top:101px;width:5px;height:4px;background:#e0e0e0;"></div><div style="left:42px;top:97px;width:5px;height:4px;background:#b8b8b8;"></div><div style="left:42px;top:101px;width:5px;height:4px;background:#c0c0c0;"></div><div style="left:47px;top:97px;width:5px;height:4px;background:#a8a8a8;"></div><div style="left:47px;top:101px;width:5px;height:4px;background:#b8b8b8;"></div><div style="left:52px;top:97px;width:5px;height:4px;background:#787878;"></div><div style="left:52px;top:101px;width:5px;height:4px;background:#c0c0c0;"></div><div style="left:57px;top:97px;width:5px;height:4px;background:#a8a8a8;"></div><div style="left:57px;top:101px;width:5px;height:4px;background:#e0e0e0;"></div><div style="left:62px;top:97px;width:5px;height:4px;background:#909090;"></div><div style="left:62px;top:101px;width:5px;height:4px;background:#989898;"></div><div style="left:67px;top:97px;width:5px;height:4px;background:#b8b8b8;"></div><div style="left:67px;top:101px;width:5px;height:4px;background:#c0c0c0;"></div><div style="left:72px;top:97px;width:5px;height:4px;background:#909090;"></div><div style="left:72px;top:101px;width:5px;height:4px;background:#e0e0e0;"></div><div style="left:77px;top:97px;width:5px;height:4px;background:#a8a8a8;"></div><div style="left:77px;top:101px;width:5px;height:4px;background:#909090;"></div><div style="left:82px;top:97px;width:5px;height:4px;background:#909090;"></div><div style="left:82px;top:101px;width:5px;height:4px;background:#b0b0b0;"></div><div style="left:87px;top:97px;width:5px;height:4px;background:#b0b0b0;"></div><div style="left:87px;top:101px;width:5px;height:4px;background:#909090;"></div><div style="left:95px;top:146px;width:5px;height:4px;background:#b8b8b8;"></div><div style="left:95px;top:150px;width:5px;height:4px;background:#787878;"></div><div style="left:100px;top:146px;width:5px;height:4px;background:#e0e0e0;"></div><div style="left:100px;top:150px;width:5px;height:4px;background:#d0d0d0;"></div><div style="left:105px;top:146px;width:5px;height:4px;background:#c0c0c0;"></div><div style="left:105px;top:150px;width:5px;height:4px;background:#989898;"></div><div style="left:110px;top:146px;width:5px;height:4px;background:#909090;"></div><div style="left:110px;top:150px;width:5px;height:4px;background:#d0d0d0;"></div><div style="left:115px;top:146px;width:5px;height:4px;background:#b8b8b8;"></div><div style="left:115px;top:150px;width:5px;height:4px;background:#787878;"></div><div style="left:120px;top:146px;width:5px;height:4px;background:#b8b8b8;"></div><div style="left:120px;top:150px;width:5px;height:4px;background:#b0b0b0;"></div><div style="left:125px;top:146px;width:5px;height:4px;background:#e0e0e0;"></div><div style="left:125px;top:150px;width:5px;height:4px;background:#909090;"></div><div style="left:130px;top:146px;width:5px;height:4px;background:#c0c0c0;"></div><div style="left:130px;top:150px;width:5px;height:4px;background:#b8b8b8;"></div><div style="left:135px;top:146px;width:5px;height:4px;background:#d0d0d0;"></div><div style="left:135px;top:150px;width:5px;height:4px;background:#c0c0c0;"></div><div style="left:140px;top:146px;width:5px;height:4px;background:#d0d0d0;"></div><div style="left:140px;top:150px;width:5px;height:4px;background:#b0b0b0;"></div><div style="left:145px;top:146px;width:5px;height:4px;background:#909090;"></div><div style="left:145px;top:150px;width:5px;height:4px;background:#b0b0b0;"></div><div style="left:150px;top:146px;width:5px;height:4px;background:#a8a8a8;"></div><div style="left:150px;top:150px;width:5px;height:4px;background:#e0e0e0;"></div><div style="left:155px;top:146px;width:5px;height:4px;background:#d0d0d0;"></div><div style="left:155px;top:150px;width:5px;height:4px;background:#989898;"></div><div style="left:160px;top:146px;width:5px;height:4px;background:#a8a8a8;"></div><div style="left:160px;top:150px;width:5px;height:4px;background:#909090;"></div><div style="left:165px;top:146px;width:5px;height:4px;background:#909090;"></div><div style="left:165px;top:150px;width:5px;height:4px;background:#e0e0e0;"></div><div style="left:170px;top:146px;width:1px;height:4px;background:#b0b0b0;"></div><div style="left:170px;top:150px;width:1px;height:4px;background:#a8a8a8;"></div><div style="left:57px;top:401px;width:5px;height:4px;background:#a8a4a0;"></div><div style="left:57px;top:405px;width:5px;height:4px;background:#a8a4a0;"></div><div style="left:62px;top:401px;width:5px;height:4px;background:#908c88;"></div><div style="left:62px;top:405px;width:5px;height:4px;background:#b8b4ae;"></div><div style="left:67px;top:401px;width:5px;height:4px;background:#908c88;"></div><div style="left:67px;top:405px;width:5px;height:4px;background:#b8b4ae;"></div><div style="left:72px;top:401px;width:5px;height:4px;background:#908c88;"></div><div style="left:72px;top:405px;width:5px;height:4px;background:#908c88;"></div><div style="left:77px;top:401px;width:5px;height:4px;background:#b0aca6;"></div><div style="left:77px;top:405px;width:5px;height:4px;background:#b8b4ae;"></div><div style="left:82px;top:401px;width:5px;height:4px;background:#a8a4a0;"></div><div style="left:82px;top:405px;width:5px;height:4px;background:#a09c96;"></div><div style="left:87px;top:401px;width:5px;height:4px;background:#c0bcb6;"></div><div style="left:87px;top:405px;width:5px;height:4px;background:#908c88;"></div><div style="left:92px;top:401px;width:5px;height:4px;background:#a09c96;"></div><div style="left:92px;top:405px;width:5px;height:4px;background:#a8a4a0;"></div><div style="left:97px;top:401px;width:5px;height:4px;background:#908c88;"></div><div style="left:97px;top:405px;width:5px;height:4px;background:#b0aca6;"></div><div style="left:102px;top:401px;width:5px;height:4px;background:#a8a4a0;"></div><div style="left:102px;top:405px;width:5px;height:4px;background:#888480;"></div><div style="left:107px;top:401px;width:5px;height:4px;background:#c0bcb6;"></div><div style="left:107px;top:405px;width:5px;height:4px;background:#908c88;"></div><div style="left:112px;top:401px;width:5px;height:4px;background:#a8a4a0;"></div><div style="left:112px;top:405px;width:5px;height:4px;background:#989490;"></div><div style="left:117px;top:401px;width:5px;height:4px;background:#b8b4ae;"></div><div style="left:117px;top:405px;width:5px;height:4px;background:#888480;"></div><div style="left:122px;top:401px;width:5px;height:4px;background:#c0bcb6;"></div><div style="left:122px;top:405px;width:5px;height:4px;background:#989490;"></div><div style="left:127px;top:401px;width:5px;height:4px;background:#c0bcb6;"></div><div style="left:127px;top:405px;width:5px;height:4px;background:#989490;"></div><div style="left:132px;top:401px;width:1px;height:4px;background:#b0aca6;"></div><div style="left:132px;top:405px;width:1px;height:4px;background:#989490;"></div></div></div><div id="clipR"><div style="left:-310px;top:-118px;width:1143px;height:881px"><svg class="i" style="left:314px;top:118px" width="16" height="16"><use href="#re"/></svg><svg class="i" style="left:314px;top:135px" width="16" height="16"><use href="#re"/></svg><svg class="i" style="left:314px;top:152px" width="16" height="16"><use href="#re"/></svg><svg class="i" style="left:314px;top:169px" width="16" height="16"><use href="#re"/></svg><svg class="i" style="left:314px;top:186px" width="16" height="16"><use href="#re"/></svg><svg class="i" style="left:314px;top:203px" width="16" height="16"><use href="#re"/></svg><svg class="i" style="left:314px;top:220px" width="16" height="16"><use href="#re"/></svg><svg class="i" style="left:314px;top:237px" width="16" height="16"><use href="#re"/></svg><svg class="i" style="left:314px;top:254px" width="16" height="16"><use href="#re"/></svg><svg class="i" style="left:314px;top:271px" width="16" height="16"><use href="#re"/></svg><svg class="i" style="left:314px;top:288px" width="16" height="16"><use href="#re"/></svg><svg class="i" style="left:314px;top:305px" width="16" height="16"><use href="#re"/></svg><svg class="i" style="left:314px;top:322px" width="16" height="16"><use href="#re"/></svg><svg class="i" style="left:314px;top:339px" width="16" height="16"><use href="#re"/></svg><svg class="i" style="left:314px;top:356px" width="16" height="16"><use href="#re"/></svg><svg class="i" style="left:314px;top:373px" width="16" height="16"><use href="#re"/></svg><svg class="i" style="left:314px;top:390px" width="16" height="16"><use href="#re"/></svg><svg class="i" style="left:314px;top:407px" width="16" height="16"><use href="#re"/></svg><div style="left:753px;top:412px;width:5px;height:4px;background:#a8a8a8;"></div><div style="left:753px;top:416px;width:5px;height:5px;background:#e0e0e0;"></div><div style="left:758px;top:412px;width:5px;height:4px;background:#909090;"></div><div style="left:758px;top:416px;width:5px;height:5px;background:#d0d0d0;"></div><div style="left:763px;top:412px;width:5px;height:4px;background:#b8b8b8;"></div><div style="left:763px;top:416px;width:5px;height:5px;background:#e0e0e0;"></div><div style="left:768px;top:412px;width:5px;height:4px;background:#a8a8a8;"></div><div style="left:768px;top:416px;width:5px;height:5px;background:#b8b8b8;"></div><div style="left:773px;top:412px;width:5px;height:4px;background:#787878;"></div><div style="left:773px;top:416px;width:5px;height:5px;background:#989898;"></div><div style="left:778px;top:412px;width:5px;height:4px;background:#989898;"></div><div style="left:778px;top:416px;width:5px;height:5px;background:#b8b8b8;"></div><div style="left:783px;top:412px;width:5px;height:4px;background:#c0c0c0;"></div><div style="left:783px;top:416px;width:5px;height:5px;background:#909090;"></div><div style="left:788px;top:412px;width:5px;height:4px;background:#a8a8a8;"></div><div style="left:788px;top:416px;width:5px;height:5px;background:#989898;"></div><div style="left:793px;top:412px;width:5px;height:4px;background:#a8a8a8;"></div><div style="left:793px;top:416px;width:5px;height:5px;background:#e0e0e0;"></div><div style="left:798px;top:412px;width:5px;height:4px;background:#787878;"></div><div style="left:798px;top:416px;width:5px;height:5px;background:#d0d0d0;"></div><div style="left:803px;top:412px;width:5px;height:4px;background:#989898;"></div><div style="left:803px;top:416px;width:5px;height:5px;background:#d0d0d0;"></div><div style="left:808px;top:412px;width:5px;height:4px;background:#909090;"></div><div style="left:808px;top:416px;width:5px;height:5px;background:#e0e0e0;"></div><div style="left:813px;top:412px;width:5px;height:4px;background:#b0b0b0;"></div><div style="left:813px;top:416px;width:5px;height:5px;background:#e0e0e0;"></div><div style="left:818px;top:412px;width:5px;height:4px;background:#989898;"></div><div style="left:818px;top:416px;width:5px;height:5px;background:#a8a8a8;"></div><div style="left:823px;top:412px;width:5px;height:4px;background:#909090;"></div><div style="left:823px;top:416px;width:5px;height:5px;background:#909090;"></div><div style="left:828px;top:412px;width:5px;height:4px;background:#e0e0e0;"></div><div style="left:828px;top:416px;width:5px;height:5px;background:#d0d0d0;"></div><div style="left:833px;top:412px;width:5px;height:4px;background:#a8a8a8;"></div><div style="left:833px;top:416px;width:5px;height:5px;background:#b0b0b0;"></div><div style="left:838px;top:412px;width:5px;height:4px;background:#909090;"></div><div style="left:838px;top:416px;width:5px;height:5px;background:#d0d0d0;"></div><div style="left:843px;top:412px;width:5px;height:4px;background:#d0d0d0;"></div><div style="left:843px;top:416px;width:5px;height:5px;background:#e0e0e0;"></div><div style="left:848px;top:412px;width:5px;height:4px;background:#c0c0c0;"></div><div style="left:848px;top:416px;width:5px;height:5px;background:#909090;"></div><div style="left:853px;top:412px;width:5px;height:4px;background:#909090;"></div><div style="left:853px;top:416px;width:5px;height:5px;background:#b0b0b0;"></div><div style="left:858px;top:412px;width:2px;height:4px;background:#787878;"></div><div style="left:858px;top:416px;width:2px;height:5px;background:#b0b0b0;"></div><svg class="i" style="left:314px;top:424px" width="16" height="16"><use href="#re"/></svg><div style="left:754px;top:429px;width:5px;height:4px;background:#989898;"></div><div style="left:754px;top:433px;width:5px;height:5px;background:#989898;"></div><div style="left:759px;top:429px;width:5px;height:4px;background:#a8a8a8;"></div><div style="left:759px;top:433px;width:5px;height:5px;background:#a8a8a8;"></div><div style="left:764px;top:429px;width:5px;height:4px;background:#d0d0d0;"></div><div style="left:764px;top:433px;width:5px;height:5px;background:#b8b8b8;"></div><div style="left:769px;top:429px;width:5px;height:4px;background:#d0d0d0;"></div><div style="left:769px;top:433px;width:5px;height:5px;background:#909090;"></div><div style="left:774px;top:429px;width:5px;height:4px;background:#c0c0c0;"></div><div style="left:774px;top:433px;width:5px;height:5px;background:#d0d0d0;"></div><div style="left:779px;top:429px;width:5px;height:4px;background:#d0d0d0;"></div><div style="left:779px;top:433px;width:5px;height:5px;background:#787878;"></div><div style="left:784px;top:429px;width:5px;height:4px;background:#d0d0d0;"></div><div style="left:784px;top:433px;width:5px;height:5px;background:#787878;"></div><div style="left:789px;top:429px;width:5px;height:4px;background:#b8b8b8;"></div><div style="left:789px;top:433px;width:5px;height:5px;background:#989898;"></div><div style="left:794px;top:429px;width:5px;height:4px;background:#b0b0b0;"></div><div style="left:794px;top:433px;width:5px;height:5px;background:#a8a8a8;"></div><div style="left:799px;top:429px;width:5px;height:4px;background:#e0e0e0;"></div><div style="left:799px;top:433px;width:5px;height:5px;background:#b8b8b8;"></div><div style="left:804px;top:429px;width:5px;height:4px;background:#c0c0c0;"></div><div style="left:804px;top:433px;width:5px;height:5px;background:#989898;"></div><div style="left:809px;top:429px;width:5px;height:4px;background:#e0e0e0;"></div><div style="left:809px;top:433px;width:5px;height:5px;background:#b0b0b0;"></div><div style="left:814px;top:429px;width:5px;height:4px;background:#909090;"></div><div style="left:814px;top:433px;width:5px;height:5px;background:#989898;"></div><div style="left:819px;top:429px;width:5px;height:4px;background:#d0d0d0;"></div><div style="left:819px;top:433px;width:5px;height:5px;background:#e0e0e0;"></div><div style="left:824px;top:429px;width:5px;height:4px;background:#e0e0e0;"></div><div style="left:824px;top:433px;width:5px;height:5px;background:#909090;"></div><div style="left:829px;top:429px;width:5px;height:4px;background:#c0c0c0;"></div><div style="left:829px;top:433px;width:5px;height:5px;background:#b8b8b8;"></div><div style="left:834px;top:429px;width:5px;height:4px;background:#a8a8a8;"></div><div style="left:834px;top:433px;width:5px;height:5px;background:#787878;"></div><div style="left:839px;top:429px;width:5px;height:4px;background:#a8a8a8;"></div><div style="left:839px;top:433px;width:5px;height:5px;background:#c0c0c0;"></div><div style="left:844px;top:429px;width:5px;height:4px;background:#b8b8b8;"></div><div style="left:844px;top:433px;width:5px;height:5px;background:#a8a8a8;"></div><div style="left:849px;top:429px;width:5px;height:4px;background:#a8a8a8;"></div><div style="left:849px;top:433px;width:5px;height:5px;background:#989898;"></div><div style="left:854px;top:429px;width:5px;height:4px;background:#787878;"></div><div style="left:854px;top:433px;width:5px;height:5px;background:#c0c0c0;"></div><div style="left:859px;top:429px;width:1px;height:4px;background:#d0d0d0;"></div><div style="left:859px;top:433px;width:1px;height:5px;background:#b8b8b8;"></div><svg class="i" style="left:314px;top:441px" width="16" height="16"><use href="#re"/></svg><svg class="i" style="left:314px;top:458px" width="16" height="16"><use href="#re"/></svg><div style="left:758px;top:463px;width:5px;height:4px;background:#b8b8b8;"></div><div style="left:758px;top:467px;width:5px;height:5px;background:#e0e0e0;"></div><div style="left:763px;top:463px;width:5px;height:4px;background:#909090;"></div><div style="left:763px;top:467px;width:5px;height:5px;background:#b0b0b0;"></div><div style="left:768px;top:463px;width:5px;height:4px;background:#787878;"></div><div style="left:768px;top:467px;width:5px;height:5px;background:#b0b0b0;"></div><div style="left:773px;top:463px;width:5px;height:4px;background:#c0c0c0;"></div><div style="left:773px;top:467px;width:5px;height:5px;background:#d0d0d0;"></div><div style="left:778px;top:463px;width:5px;height:4px;background:#787878;"></div><div style="left:778px;top:467px;width:5px;height:5px;background:#b8b8b8;"></div><div style="left:783px;top:463px;width:5px;height:4px;background:#909090;"></div><div style="left:783px;top:467px;width:5px;height:5px;background:#e0e0e0;"></div><div style="left:788px;top:463px;width:5px;height:4px;background:#c0c0c0;"></div><div style="left:788px;top:467px;width:5px;height:5px;background:#909090;"></div><div style="left:793px;top:463px;width:5px;height:4px;background:#b0b0b0;"></div><div style="left:793px;top:467px;width:5px;height:5px;background:#b8b8b8;"></div><div style="left:798px;top:463px;width:5px;height:4px;background:#909090;"></div><div style="left:798px;top:467px;width:5px;height:5px;background:#c0c0c0;"></div><div style="left:803px;top:463px;width:5px;height:4px;background:#d0d0d0;"></div><div style="left:803px;top:467px;width:5px;height:5px;background:#a8a8a8;"></div><div style="left:808px;top:463px;width:5px;height:4px;background:#787878;"></div><div style="left:808px;top:467px;width:5px;height:5px;background:#d0d0d0;"></div><div style="left:813px;top:463px;width:5px;height:4px;background:#c0c0c0;"></div><div style="left:813px;top:467px;width:5px;height:5px;background:#e0e0e0;"></div><div style="left:818px;top:463px;width:5px;height:4px;background:#e0e0e0;"></div><div style="left:818px;top:467px;width:5px;height:5px;background:#a8a8a8;"></div><div style="left:823px;top:463px;width:5px;height:4px;background:#989898;"></div><div style="left:823px;top:467px;width:5px;height:5px;background:#909090;"></div><div style="left:828px;top:463px;width:5px;height:4px;background:#d0d0d0;"></div><div style="left:828px;top:467px;width:5px;height:5px;background:#d0d0d0;"></div><div style="left:833px;top:463px;width:5px;height:4px;background:#b0b0b0;"></div><div style="left:833px;top:467px;width:5px;height:5px;background:#c0c0c0;"></div><div style="left:838px;top:463px;width:5px;height:4px;background:#787878;"></div><div style="left:838px;top:467px;width:5px;height:5px;background:#c0c0c0;"></div><div style="left:843px;top:463px;width:5px;height:4px;background:#e0e0e0;"></div><div style="left:843px;top:467px;width:5px;height:5px;background:#787878;"></div><div style="left:848px;top:463px;width:5px;height:4px;background:#787878;"></div><div style="left:848px;top:467px;width:5px;height:5px;background:#b8b8b8;"></div><div style="left:853px;top:463px;width:5px;height:4px;background:#c0c0c0;"></div><div style="left:853px;top:467px;width:5px;height:5px;background:#b0b0b0;"></div><div style="left:858px;top:463px;width:2px;height:4px;background:#b8b8b8;"></div><div style="left:858px;top:467px;width:2px;height:5px;background:#989898;"></div><svg class="i" style="left:314px;top:475px" width="16" height="16"><use href="#re"/></svg><svg class="i" style="left:314px;top:492px" width="16" height="16"><use href="#re"/></svg><svg class="i" style="left:314px;top:509px" width="16" height="16"><use href="#re"/></svg><svg class="i" style="left:314px;top:526px" width="16" height="16"><use href="#re"/></svg><svg class="i" style="left:314px;top:543px" width="16" height="16"><use href="#re"/></svg><svg class="i" style="left:314px;top:560px" width="16" height="16"><use href="#re"/></svg><svg class="i" style="left:314px;top:577px" width="16" height="16"><use href="#re"/></svg><svg class="i" style="left:314px;top:594px" width="16" height="16"><use href="#re"/></svg><svg class="i" style="left:314px;top:611px" width="16" height="16"><use href="#re"/></svg><div style="left:758px;top:616px;width:5px;height:4px;background:#a8a8a8;"></div><div style="left:758px;top:620px;width:5px;height:5px;background:#d0d0d0;"></div><div style="left:763px;top:616px;width:5px;height:4px;background:#989898;"></div><div style="left:763px;top:620px;width:5px;height:5px;background:#a8a8a8;"></div><div style="left:768px;top:616px;width:5px;height:4px;background:#d0d0d0;"></div><div style="left:768px;top:620px;width:5px;height:5px;background:#e0e0e0;"></div><div style="left:773px;top:616px;width:5px;height:4px;background:#e0e0e0;"></div><div style="left:773px;top:620px;width:5px;height:5px;background:#909090;"></div><div style="left:778px;top:616px;width:5px;height:4px;background:#909090;"></div><div style="left:778px;top:620px;width:5px;height:5px;background:#787878;"></div><div style="left:783px;top:616px;width:5px;height:4px;background:#c0c0c0;"></div><div style="left:783px;top:620px;width:5px;height:5px;background:#b8b8b8;"></div><div style="left:788px;top:616px;width:5px;height:4px;background:#909090;"></div><div style="left:788px;top:620px;width:5px;height:5px;background:#e0e0e0;"></div><div style="left:793px;top:616px;width:5px;height:4px;background:#e0e0e0;"></div><div style="left:793px;top:620px;width:5px;height:5px;background:#b0b0b0;"></div><div style="left:798px;top:616px;width:5px;height:4px;background:#787878;"></div><div style="left:798px;top:620px;width:5px;height:5px;background:#d0d0d0;"></div><div style="left:803px;top:616px;width:5px;height:4px;background:#989898;"></div><div style="left:803px;top:620px;width:5px;height:5px;background:#909090;"></div><div style="left:808px;top:616px;width:5px;height:4px;background:#b0b0b0;"></div><div style="left:808px;top:620px;width:5px;height:5px;background:#c0c0c0;"></div><div style="left:813px;top:616px;width:5px;height:4px;background:#a8a8a8;"></div><div style="left:813px;top:620px;width:5px;height:5px;background:#989898;"></div><div style="left:818px;top:616px;width:5px;height:4px;background:#989898;"></div><div style="left:818px;top:620px;width:5px;height:5px;background:#d0d0d0;"></div><div style="left:823px;top:616px;width:5px;height:4px;background:#d0d0d0;"></div><div style="left:823px;top:620px;width:5px;height:5px;background:#787878;"></div><div style="left:828px;top:616px;width:5px;height:4px;background:#989898;"></div><div style="left:828px;top:620px;width:5px;height:5px;background:#909090;"></div><div style="left:833px;top:616px;width:5px;height:4px;background:#989898;"></div><div style="left:833px;top:620px;width:5px;height:5px;background:#e0e0e0;"></div><div style="left:838px;top:616px;width:5px;height:4px;background:#b0b0b0;"></div><div style="left:838px;top:620px;width:5px;height:5px;background:#a8a8a8;"></div><div style="left:843px;top:616px;width:5px;height:4px;background:#787878;"></div><div style="left:843px;top:620px;width:5px;height:5px;background:#e0e0e0;"></div><div style="left:848px;top:616px;width:5px;height:4px;background:#e0e0e0;"></div><div style="left:848px;top:620px;width:5px;height:5px;background:#d0d0d0;"></div><div style="left:853px;top:616px;width:5px;height:4px;background:#c0c0c0;"></div><div style="left:853px;top:620px;width:5px;height:5px;background:#b8b8b8;"></div><div style="left:858px;top:616px;width:2px;height:4px;background:#b0b0b0;"></div><div style="left:858px;top:620px;width:2px;height:5px;background:#d0d0d0;"></div><svg class="i" style="left:314px;top:628px" width="16" height="16"><use href="#re"/></svg><svg class="i" style="left:314px;top:645px" width="16" height="16"><use href="#re"/></svg><svg class="i" style="left:314px;top:662px" width="16" height="16"><use href="#re"/></svg><svg class="i" style="left:314px;top:679px" width="16" height="16"><use href="#re"/></svg><svg class="i" style="left:314px;top:696px" width="16" height="16"><use href="#re"/></svg><div style="left:330px;top:713px;width:659px;height:17px;background:#d4d0c8;"></div><svg class="i" style="left:314px;top:713px" width="16" height="16"><use href="#re"/></svg><svg class="i" style="left:314px;top:730px" width="16" height="16"><use href="#re"/></svg><svg class="i" style="left:314px;top:747px" width="16" height="16"><use href="#fo"/></svg><svg class="i" style="left:314px;top:764px" width="16" height="16"><use href="#re"/></svg><svg class="i" style="left:314px;top:781px" width="16" height="16"><use href="#re"/></svg><svg class="i" style="left:314px;top:798px" width="16" height="16"><use href="#re"/></svg><svg class="i" style="left:314px;top:815px" width="16" height="16"><use href="#re"/></svg><svg class="i" style="left:314px;top:832px" width="16" height="16"><use href="#re"/></svg><svg class="i" style="left:314px;top:849px" width="16" height="16"><use href="#re"/></svg></div></div><div class="tl" style="left:0;top:0;width:1143px;height:881px"><span class="t" style="left:24px;top:7px;letter-spacing:0.64px;font-weight:bold;-webkit-text-stroke:0.3px;color:#d4d0c8;">dnsmgmt</span><span class="t" style="left:81px;top:7px;letter-spacing:1.20px;font-weight:bold;-webkit-text-stroke:0.3px;color:#d4d0c8;">-</span><span class="t" style="left:88px;top:7px;letter-spacing:0.71px;font-weight:bold;-webkit-text-stroke:0.3px;color:#d4d0c8;">[DNS\</span><span class="t" style="left:204.5px;top:7px;letter-spacing:0.38px;font-weight:bold;-webkit-text-stroke:0.3px;color:#d4d0c8;">1</span><span class="t" style="left:212px;top:7px;font-weight:bold;-webkit-text-stroke:0.3px;color:#d4d0c8;">\</span><span class="t" style="left:216.5px;top:7px;letter-spacing:0.44px;font-weight:bold;-webkit-text-stroke:0.3px;color:#d4d0c8;">Forward</span><span class="t" style="left:265.5px;top:7px;letter-spacing:0.30px;font-weight:bold;-webkit-text-stroke:0.3px;color:#d4d0c8;">Lookup</span><span class="t" style="left:309px;top:7px;letter-spacing:0.52px;font-weight:bold;-webkit-text-stroke:0.3px;color:#d4d0c8;">Zones</span><span class="t" style="left:344.5px;top:7px;font-weight:bold;-webkit-text-stroke:0.3px;color:#d4d0c8;">\</span><span class="t" style="left:440px;top:7px;letter-spacing:0.17px;font-weight:bold;-webkit-text-stroke:0.3px;color:#d4d0c8;">.local]</span><span class="t" style="left:30px;top:30px;letter-spacing:-0.43px;"><u>F</u>ile</span><span class="t" style="left:62px;top:30px;letter-spacing:-0.10px;"><u>A</u>ction</span><span class="t" style="left:108px;top:30px;letter-spacing:-0.41px;"><u>V</u>iew</span><span class="t" style="left:146px;top:30px;letter-spacing:-0.19px;"><u>W</u>indow</span><span class="t" style="left:200px;top:30px;letter-spacing:-0.41px;"><u>H</u>elp</span><span class="t" style="left:403px;top:82px;letter-spacing:0.23px;font-weight:bold;-webkit-text-stroke:0.3px;color:#ffffff;">.local</span><span class="t" style="left:444px;top:82px;letter-spacing:-0.03px;color:#ffffff;">144 record(s)</span><span class="t" style="left:315px;top:104px;letter-spacing:-0.45px;">Name</span><span class="t" style="left:496px;top:104px;letter-spacing:0.04px;">Type</span><span class="t" style="left:645px;top:104px;letter-spacing:-0.06px;">Data</span></div><div class="tl" style="left:6px;top:77px;width:297px;height:762px;overflow:hidden"><div style="left:-6px;top:-77px;width:310px;height:860px"><span class="t" style="left:37px;top:111px;letter-spacing:-0.33px;">Cached Lookups</span><span class="t" style="left:37px;top:127px;letter-spacing:-0.21px;">Forward Lookup Zones</span><span class="t" style="left:75px;top:159px;letter-spacing:-0.31px;">dc</span><span class="t" style="left:95px;top:175px;letter-spacing:-0.12px;">_sites</span><span class="t" style="left:113px;top:191px;letter-spacing:-0.03px;">Default-First-Site</span><span class="t" style="left:133px;top:207px;letter-spacing:0.05px;">_tcp</span><span class="t" style="left:95px;top:223px;letter-spacing:0.05px;">_tcp</span><span class="t" style="left:75px;top:239px;letter-spacing:-0.37px;">domains</span><span class="t" style="left:94px;top:255px;">e2170f25-1a92-4282-ae39-001fbac49313</span><span class="t" style="left:114px;top:271px;letter-spacing:0.05px;">_tcp</span><span class="t" style="left:75px;top:287px;letter-spacing:-0.31px;">gc</span><span class="t" style="left:95px;top:303px;letter-spacing:-0.12px;">_sites</span><span class="t" style="left:113px;top:319px;letter-spacing:-0.03px;">Default-First-Site</span><span class="t" style="left:133px;top:335px;letter-spacing:0.05px;">_tcp</span><span class="t" style="left:95px;top:351px;letter-spacing:0.05px;">_tcp</span><span class="t" style="left:75px;top:367px;letter-spacing:-0.25px;">pdc</span><span class="t" style="left:95px;top:383px;letter-spacing:0.05px;">_tcp</span><span class="t" style="left:76px;top:415px;letter-spacing:-0.45px;">_msdcs</span><span class="t" style="left:76px;top:431px;letter-spacing:-0.12px;">_sites</span><span class="t" style="left:76px;top:447px;letter-spacing:0.05px;">_tcp</span><span class="t" style="left:95px;top:463px;letter-spacing:-0.45px;">_smb</span><span class="t" style="left:76px;top:479px;letter-spacing:-0.12px;">_udp</span><span class="t" style="left:95px;top:495px;letter-spacing:-0.16px;">_dns-sd</span><span class="t" style="left:75px;top:511px;letter-spacing:-0.45px;">com</span><span class="t" style="left:94px;top:527px;letter-spacing:-0.03px;">ringcentral</span><span class="t" style="left:75px;top:543px;letter-spacing:-0.43px;">DomainDnsZones</span><span class="t" style="left:75px;top:559px;letter-spacing:-0.24px;">ForestDnsZones</span><span class="t" style="left:75px;top:575px;letter-spacing:-0.05px;">TAPI3Directory</span><span class="t" style="left:37px;top:591px;letter-spacing:-0.24px;">Reverse Lookup Zones</span><span class="t" style="left:56px;top:607px;letter-spacing:0.15px;">0.168.192.in-addr.arpa</span><span class="t" style="left:56px;top:623px;letter-spacing:0.15px;">0.in-addr.arpa</span><span class="t" style="left:56px;top:639px;letter-spacing:0.15px;">1.168.192.in-addr.arpa</span><span class="t" style="left:56px;top:655px;letter-spacing:0.12px;">127.in-addr.arpa</span><span class="t" style="left:75px;top:671px;letter-spacing:-0.12px;">0</span><span class="t" style="left:94px;top:687px;letter-spacing:-0.12px;">0</span><span class="t" style="left:56px;top:703px;letter-spacing:0.12px;">255.in-addr.arpa</span><span class="t" style="left:37px;top:719px;letter-spacing:-0.13px;">Event Viewer</span><span class="t" style="left:5px;top:79px;">NS</span><span class="t" style="left:18px;top:95px;width:4px;overflow:hidden;">E</span><span class="t" style="left:92px;top:95px;">1</span><span class="t" style="left:57px;top:143px;letter-spacing:-0.42px;">_msdcs.</span><span class="t" style="left:172px;top:143px;letter-spacing:-0.11px;">.local</span><span class="t" style="left:133px;top:399px;letter-spacing:-0.11px;">.local</span></div></div><div class="tl" style="left:310px;top:118px;width:813px;height:737px;overflow:hidden"><div style="left:-310px;top:-118px;width:1143px;height:881px"><span class="t" style="left:331px;top:121px;letter-spacing:-0.23px;">machine44-32</span><span class="t" style="left:495px;top:121px;letter-spacing:-0.04px;">Host (A)</span><span class="t" style="left:645px;top:121px;letter-spacing:0.15px;">192.168.1.54</span><span class="t" style="left:331px;top:138px;letter-spacing:-0.23px;">machine44-64</span><span class="t" style="left:495px;top:138px;letter-spacing:-0.04px;">Host (A)</span><span class="t" style="left:645px;top:138px;letter-spacing:0.15px;">192.168.1.54</span><span class="t" style="left:331px;top:155px;letter-spacing:-0.31px;">machine46</span><span class="t" style="left:495px;top:155px;letter-spacing:-0.04px;">Host (A)</span><span class="t" style="left:645px;top:155px;letter-spacing:0.15px;">192.168.1.56</span><span class="t" style="left:331px;top:172px;letter-spacing:-0.55px;">MACHINE52</span><span class="t" style="left:495px;top:172px;letter-spacing:-0.04px;">Host (A)</span><span class="t" style="left:645px;top:172px;letter-spacing:0.13px;">192.168.1.162</span><span class="t" style="left:331px;top:189px;letter-spacing:-0.31px;">Machine58</span><span class="t" style="left:495px;top:189px;letter-spacing:-0.04px;">Host (A)</span><span class="t" style="left:645px;top:189px;letter-spacing:0.15px;">192.168.1.22</span><span class="t" style="left:331px;top:206px;letter-spacing:-0.34px;">machine6</span><span class="t" style="left:495px;top:206px;letter-spacing:-0.04px;">Host (A)</span><span class="t" style="left:645px;top:206px;letter-spacing:0.15px;">192.168.1.16</span><span class="t" style="left:331px;top:223px;letter-spacing:-0.31px;">machine60</span><span class="t" style="left:495px;top:223px;letter-spacing:-0.04px;">Host (A)</span><span class="t" style="left:645px;top:223px;letter-spacing:0.15px;">192.168.1.14</span><span class="t" style="left:331px;top:240px;letter-spacing:-0.23px;">machine68-32</span><span class="t" style="left:495px;top:240px;letter-spacing:-0.04px;">Host (A)</span><span class="t" style="left:645px;top:240px;letter-spacing:0.15px;">192.168.1.78</span><span class="t" style="left:331px;top:257px;letter-spacing:-0.23px;">machine68-64</span><span class="t" style="left:495px;top:257px;letter-spacing:-0.04px;">Host (A)</span><span class="t" style="left:645px;top:257px;letter-spacing:0.15px;">192.168.1.78</span><span class="t" style="left:331px;top:274px;letter-spacing:-0.31px;">machine70</span><span class="t" style="left:495px;top:274px;letter-spacing:-0.04px;">Host (A)</span><span class="t" style="left:645px;top:274px;letter-spacing:0.15px;">192.168.1.80</span><span class="t" style="left:331px;top:291px;letter-spacing:-0.31px;">machine70</span><span class="t" style="left:495px;top:291px;letter-spacing:-0.04px;">Host (A)</span><span class="t" style="left:645px;top:291px;letter-spacing:0.15px;">192.168.1.95</span><span class="t" style="left:331px;top:308px;letter-spacing:-0.31px;">machine72</span><span class="t" style="left:495px;top:308px;letter-spacing:-0.04px;">Host (A)</span><span class="t" style="left:645px;top:308px;letter-spacing:0.15px;">192.168.1.42</span><span class="t" style="left:331px;top:325px;letter-spacing:-0.55px;">MACHINE77</span><span class="t" style="left:495px;top:325px;letter-spacing:-0.04px;">Host (A)</span><span class="t" style="left:645px;top:325px;letter-spacing:0.15px;">192.168.1.16</span><span class="t" style="left:331px;top:342px;letter-spacing:-0.55px;">MACHINE77</span><span class="t" style="left:495px;top:342px;letter-spacing:-0.04px;">Host (A)</span><span class="t" style="left:645px;top:342px;letter-spacing:0.15px;">192.168.1.87</span><span class="t" style="left:331px;top:359px;letter-spacing:-0.55px;">MACHINE78</span><span class="t" style="left:495px;top:359px;letter-spacing:-0.04px;">Host (A)</span><span class="t" style="left:645px;top:359px;letter-spacing:0.15px;">192.168.1.88</span><span class="t" style="left:331px;top:376px;letter-spacing:-0.31px;">machine80</span><span class="t" style="left:495px;top:376px;letter-spacing:-0.04px;">Host (A)</span><span class="t" style="left:645px;top:376px;letter-spacing:0.15px;">192.168.1.25</span><span class="t" style="left:331px;top:393px;letter-spacing:-0.31px;">machine80</span><span class="t" style="left:495px;top:393px;letter-spacing:-0.04px;">Host (A)</span><span class="t" style="left:645px;top:393px;letter-spacing:0.13px;">192.168.1.120</span><span class="t" style="left:331px;top:410px;letter-spacing:-0.31px;">machine80</span><span class="t" style="left:495px;top:410px;letter-spacing:-0.09px;">IPv6 Host (AAAA)</span><span class="t" style="left:645px;top:410px;letter-spacing:0.18px;">fdd0:df73:a30d:daac:</span><span class="t" style="left:331px;top:427px;letter-spacing:-0.31px;">machine80</span><span class="t" style="left:495px;top:427px;letter-spacing:-0.09px;">IPv6 Host (AAAA)</span><span class="t" style="left:645px;top:427px;letter-spacing:0.17px;">fdd0:df73:a30d:daac:e</span><span class="t" style="left:331px;top:444px;letter-spacing:-0.31px;">machine84</span><span class="t" style="left:495px;top:444px;letter-spacing:-0.04px;">Host (A)</span><span class="t" style="left:645px;top:444px;letter-spacing:0.15px;">192.168.1.94</span><span class="t" style="left:331px;top:461px;letter-spacing:-0.31px;">machine84</span><span class="t" style="left:495px;top:461px;letter-spacing:-0.09px;">IPv6 Host (AAAA)</span><span class="t" style="left:645px;top:461px;letter-spacing:0.17px;">fdd0:df73:a30d:daac:d</span><span class="t" style="left:331px;top:478px;letter-spacing:-0.34px;">machine9</span><span class="t" style="left:495px;top:478px;letter-spacing:-0.04px;">Host (A)</span><span class="t" style="left:645px;top:478px;letter-spacing:0.15px;">192.168.1.19</span><span class="t" style="left:331px;top:495px;letter-spacing:-0.23px;">MacServer1</span><span class="t" style="left:495px;top:495px;letter-spacing:-0.04px;">Host (A)</span><span class="t" style="left:645px;top:495px;letter-spacing:0.15px;">192.168.1.27</span><span class="t" style="left:331px;top:512px;letter-spacing:-0.18px;">onlinesolutions</span><span class="t" style="left:495px;top:512px;letter-spacing:-0.04px;">Host (A)</span><span class="t" style="left:645px;top:512px;letter-spacing:0.17px;">192.168.1.2</span><span class="t" style="left:331px;top:529px;">partneracs</span><span class="t" style="left:495px;top:529px;letter-spacing:-0.04px;">Host (A)</span><span class="t" style="left:645px;top:529px;letter-spacing:0.17px;">192.168.1.2</span><span class="t" style="left:331px;top:546px;letter-spacing:-0.08px;">pfsense</span><span class="t" style="left:495px;top:546px;letter-spacing:-0.04px;">Host (A)</span><span class="t" style="left:645px;top:546px;letter-spacing:0.13px;">192.168.1.249</span><span class="t" style="left:331px;top:563px;letter-spacing:-0.17px;">ricoh</span><span class="t" style="left:495px;top:563px;letter-spacing:-0.04px;">Host (A)</span><span class="t" style="left:645px;top:563px;letter-spacing:0.13px;">192.168.1.206</span><span class="t" style="left:331px;top:580px;letter-spacing:-0.08px;">scanning-net</span><span class="t" style="left:495px;top:580px;letter-spacing:-0.04px;">Host (A)</span><span class="t" style="left:645px;top:580px;letter-spacing:0.17px;">192.168.1.5</span><span class="t" style="left:331px;top:597px;letter-spacing:-0.19px;">SearchServer</span><span class="t" style="left:495px;top:597px;letter-spacing:-0.04px;">Host (A)</span><span class="t" style="left:645px;top:597px;letter-spacing:0.15px;">192.168.1.30</span><span class="t" style="left:331px;top:614px;letter-spacing:-0.19px;">SearchServer</span><span class="t" style="left:495px;top:614px;letter-spacing:-0.09px;">IPv6 Host (AAAA)</span><span class="t" style="left:645px;top:614px;letter-spacing:0.17px;">fdd0:df73:a30d:daac:2</span><span class="t" style="left:331px;top:631px;letter-spacing:0.05px;">server2</span><span class="t" style="left:495px;top:631px;letter-spacing:-0.04px;">Host (A)</span><span class="t" style="left:645px;top:631px;letter-spacing:0.17px;">192.168.1.9</span><span class="t" style="left:331px;top:648px;letter-spacing:0.05px;">server3</span><span class="t" style="left:495px;top:648px;letter-spacing:-0.04px;">Host (A)</span><span class="t" style="left:645px;top:648px;letter-spacing:0.17px;">192.168.1.3</span><span class="t" style="left:331px;top:665px;letter-spacing:0.05px;">server4</span><span class="t" style="left:495px;top:665px;letter-spacing:-0.04px;">Host (A)</span><span class="t" style="left:645px;top:665px;letter-spacing:0.17px;">192.168.1.4</span><span class="t" style="left:331px;top:682px;letter-spacing:-0.07px;">Server5</span><span class="t" style="left:495px;top:682px;letter-spacing:-0.04px;">Host (A)</span><span class="t" style="left:645px;top:682px;letter-spacing:0.17px;">192.168.1.5</span><span class="t" style="left:331px;top:699px;letter-spacing:-0.07px;">Server6</span><span class="t" style="left:495px;top:699px;letter-spacing:-0.04px;">Host (A)</span><span class="t" style="left:645px;top:699px;letter-spacing:0.15px;">192.168.1.81</span><span class="t" style="left:331px;top:716px;letter-spacing:-0.07px;">Server8</span><span class="t" style="left:495px;top:716px;letter-spacing:-0.04px;">Host (A)</span><span class="t" style="left:645px;top:716px;letter-spacing:0.17px;">192.168.1.8</span><span class="t" style="left:331px;top:733px;letter-spacing:-0.35px;">sip</span><span class="t" style="left:495px;top:733px;letter-spacing:-0.04px;">Host (A)</span><span class="t" style="left:645px;top:733px;letter-spacing:0.09px;">216.199.243.132</span><span class="t" style="left:331px;top:750px;letter-spacing:-0.05px;">TAPI3Directory</span><span class="t" style="left:331px;top:767px;letter-spacing:-0.80px;">TESTHYPERV</span><span class="t" style="left:495px;top:767px;letter-spacing:-0.04px;">Host (A)</span><span class="t" style="left:645px;top:767px;letter-spacing:0.15px;">192.168.1.15</span><span class="t" style="left:331px;top:784px;letter-spacing:0.17px;">testserver</span><span class="t" style="left:495px;top:784px;letter-spacing:-0.04px;">Host (A)</span><span class="t" style="left:645px;top:784px;letter-spacing:0.15px;">192.168.1.18</span><span class="t" style="left:331px;top:801px;letter-spacing:0.09px;">trackit</span><span class="t" style="left:495px;top:801px;letter-spacing:-0.04px;">Host (A)</span><span class="t" style="left:645px;top:801px;letter-spacing:0.15px;">192.168.1.31</span><span class="t" style="left:331px;top:818px;letter-spacing:-0.03px;">TriTop</span><span class="t" style="left:495px;top:818px;letter-spacing:-0.04px;">Host (A)</span><span class="t" style="left:645px;top:818px;letter-spacing:0.15px;">192.168.1.34</span><span class="t" style="left:331px;top:835px;letter-spacing:-0.08px;">twiki</span><span class="t" style="left:495px;top:835px;letter-spacing:-0.04px;">Host (A)</span><span class="t" style="left:645px;top:835px;letter-spacing:0.17px;">192.168.1.2</span><span class="t" style="left:331px;top:852px;letter-spacing:-0.30px;">VMM1-EXTMGT</span><span class="t" style="left:495px;top:852px;letter-spacing:-0.04px;">Host (A)</span><span class="t" style="left:645px;top:852px;letter-spacing:0.25px;">10.211.55.2</span></div></div></body></html>
